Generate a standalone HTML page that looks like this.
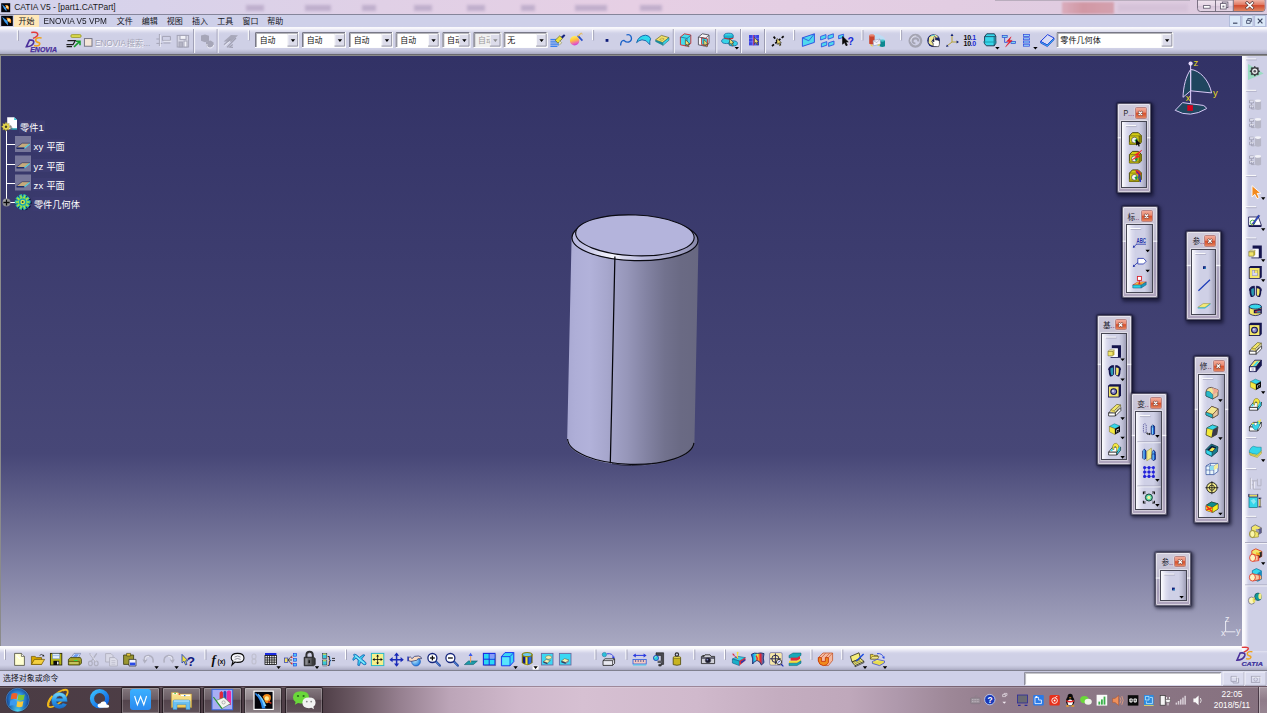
<!DOCTYPE html>
<html><head><meta charset="utf-8"><title>CATIA V5 - [part1.CATPart]</title>
<style>
html,body{margin:0;padding:0}
body{width:1267px;height:713px;overflow:hidden;position:relative;background:#cfd0e6;font-family:"Liberation Sans",sans-serif;font-size:8.2px;color:#000}
.a{position:absolute}
svg.a{left:0;top:0;overflow:visible}
.t{position:absolute;white-space:nowrap;line-height:1}
#title{left:0;top:0;width:1267px;height:14px;background:linear-gradient(90deg,#d3d3ec 0,#d8d2ea 12%,#e0d0e6 30%,#e6cfe4 50%,#e2cde2 75%,#dccbdf 100%)}
#menubar{left:0;top:14px;width:1267px;height:13px;background:#ced0e9;border-top:1px solid #85859a;box-sizing:border-box}
#tbtop{left:0;top:27px;width:1267px;height:29px;background:linear-gradient(180deg,#fbfbfd 0,#f6f6fb 1.5px,#e4e4f2 3.5px,#d2d3e8 6px,#cfd0e6 8px,#cfd0e6 22px,#bdbed4 24.5px,#a7a8c0 26.8px,#6a6a6e 27px,#6a6a6e 28px,#8b8b8b 28.2px,#8b8b8b 29px)}
#view{left:1px;top:56px;width:1241px;height:589.5px;background:linear-gradient(180deg,#323266 0,#474777 67.3%,#a9a9c2 100%)}
#viewleft{left:0;top:56px;width:1px;height:590px;background:#8b8b8b}
#tbright{left:1242px;top:56px;width:25px;height:594.5px;background:linear-gradient(90deg,#fbfbfd 0,#f8f8fc 2.5px,#e6e6f3 4.5px,#d4d5ea 6px,#cfd0e6 7.5px,#cfd0e6 100%)}
#tbbot{left:0;top:645.5px;width:1267px;height:25.5px;background:linear-gradient(180deg,#fcfcfc 0,#fafafc 2px,#e6e6f3 4.5px,#d2d3e8 7px,#cfd0e6 9px,#cfd0e6 19px,#bcbdd3 22px,#a5a5bd 24.3px,#6e6e78 24.6px,#6e6e78 25.5px)}
#status{left:0;top:671px;width:1267px;height:15px;background:#cfd0e8}
#task{left:0;top:686px;width:1267px;height:27px;background:linear-gradient(90deg,#4b3c44 0,#503f48 25.5%,#6a5862 28%,#957f8f 31.5%,#bca5b8 35.5%,#d0b9cc 41%,#d6c0d2 46%,#d0b9cc 55%,#c4adc0 61.5%,#bfa8bb 67%,#ae98ab 71%,#9d8797 75%,#927c8c 79%,#8b7685 87%,#86717f 100%)}
</style></head>
<body>
<div class="a" id="title"></div>
<div class="a" id="menubar"></div>
<div class="a" id="tbtop"></div>
<div class="a" id="view"></div>
<div class="a" id="viewleft"></div>
<div class="a" id="tbbot"></div>
<div class="a" id="tbright"></div>
<div class="a" id="status"></div>
<div class="a" id="task"></div>
<svg class="a" width="1267" height="713" viewBox="0 0 1267 713">
<defs>
<linearGradient id="gBody" gradientUnits="userSpaceOnUse" x1="567" y1="0" x2="699" y2="0">
<stop offset="0" stop-color="#a9a9d2"/><stop offset=".06" stop-color="#aeaed7"/><stop offset=".17" stop-color="#b2b2da"/>
<stop offset=".30" stop-color="#a7a7cd"/><stop offset=".345" stop-color="#a2a2c7"/><stop offset=".46" stop-color="#9696b9"/><stop offset=".60" stop-color="#8383a3"/>
<stop offset=".74" stop-color="#72728e"/><stop offset=".86" stop-color="#6a6a84"/><stop offset="1" stop-color="#686881"/></linearGradient>
<linearGradient id="gBand" gradientUnits="userSpaceOnUse" x1="572" y1="0" x2="698" y2="0">
<stop offset="0" stop-color="#b6b6de"/><stop offset=".12" stop-color="#c6c6e6"/><stop offset=".27" stop-color="#ececfa"/><stop offset=".34" stop-color="#f4f4fc"/>
<stop offset=".40" stop-color="#dcdcf0"/><stop offset=".55" stop-color="#bdbde0"/><stop offset=".78" stop-color="#a9a9cc"/><stop offset=".93" stop-color="#9797ba"/><stop offset="1" stop-color="#8585a6"/></linearGradient>
</defs>
<path d="M571.6 237.4 L567.2 439.1 A63.6 24.3 1.7 0 0 694.4 442.9 L698.5 240.6 A63 21.6 1.4 0 1 571.6 237.4Z" fill="url(#gBody)"/>
<path d="M567.6 439.1 A63.2 24 1.7 0 0 693.9 442.9" fill="none" stroke="#0a0a12" stroke-width="1.15"/>
<path d="M612 463.6 Q631 467.6 652 463.4" fill="none" stroke="#1a1a28" stroke-width="1" opacity=".75"/>
<ellipse cx="635" cy="239" rx="63" ry="21.6" transform="rotate(1.4 635 239)" fill="url(#gBand)" stroke="#0a0a12" stroke-width="1.15"/>
<ellipse cx="634.9" cy="235.4" rx="59.3" ry="20.4" transform="rotate(2.3 634.9 235.4)" fill="#b4b4dc" stroke="#0a0a12" stroke-width="1.15"/>
<path d="M614.9 256.6 L611.8 400 L610.3 463.2" fill="none" stroke="#05050c" stroke-width="1.25"/>
<path d="M6.5 131V199M6.5 144.5H15M6.5 164.5H15M6.5 183.5H15M10 202.5H15" stroke="#fff" stroke-width="1" fill="none"/>
<rect x="19" y="120.5" width="26" height="13" fill="#3c3b70"/>
<rect x="32.5" y="139.5" width="33" height="13" fill="#3c3b70"/>
<rect x="32.5" y="159" width="33" height="13" fill="#3c3b70"/>
<rect x="32.5" y="178" width="33" height="13" fill="#3c3b70"/>
<rect x="32.5" y="197" width="48" height="14" fill="#3c3b70"/>
<path d="M7.2 117.2H14.2L17 120V129.2H7.2Z" fill="#fff"/><path d="M14.2 117.2L17 120H14.2Z" fill="#35c8d8"/><path d="M11 128.3H17V129.6H11Z" fill="#109aa8"/>
<g transform="translate(6 126.7)"><path d="M0-4.6L1 -2.6 3.2-3.3 2.8-1.2 4.6 0 2.8 1.2 3.2 3.3 1 2.6 0 4.6 -1 2.6 -3.2 3.3 -2.8 1.2 -4.6 0 -2.8-1.2 -3.2-3.3 -1-2.6Z" fill="#efe25a" stroke="#8a7d20" stroke-width=".4"/><circle r="1.3" fill="#4a4420"/><circle r="2.6" fill="none" stroke="#d8c840" stroke-width=".6"/></g>
<path d="M9.5 124.5q3 1 3 4.5l-2.5 1z" fill="#555" opacity=".55"/>
<rect x="15" y="136" width="16" height="16" fill="#77779a"/>
<g transform="translate(15 136)"><path d="M1.5 11.5L7.2 7.2H15L9.5 11.5Z" fill="#c4ab7c"/><path d="M1.5 11.5H9.5V13H1.5Z" fill="#1e2c6a"/><path d="M9.5 11.5L15 7.2V8.4L9.5 13Z" fill="#52d6e2"/><path d="M1.5 11.5L7.2 7.2H15" fill="none" stroke="#2a2a5a" stroke-width=".6"/></g>
<rect x="15" y="155.5" width="16" height="16" fill="#77779a"/>
<g transform="translate(15 155.5)"><path d="M1.5 11.5L7.2 7.2H15L9.5 11.5Z" fill="#c4ab7c"/><path d="M1.5 11.5H9.5V13H1.5Z" fill="#1e2c6a"/><path d="M9.5 11.5L15 7.2V8.4L9.5 13Z" fill="#52d6e2"/><path d="M1.5 11.5L7.2 7.2H15" fill="none" stroke="#2a2a5a" stroke-width=".6"/></g>
<rect x="15" y="174.5" width="16" height="16" fill="#77779a"/>
<g transform="translate(15 174.5)"><path d="M1.5 11.5L7.2 7.2H15L9.5 11.5Z" fill="#c4ab7c"/><path d="M1.5 11.5H9.5V13H1.5Z" fill="#1e2c6a"/><path d="M9.5 11.5L15 7.2V8.4L9.5 13Z" fill="#52d6e2"/><path d="M1.5 11.5L7.2 7.2H15" fill="none" stroke="#2a2a5a" stroke-width=".6"/></g>
<circle cx="6.5" cy="202.5" r="4" fill="#8e8e92"/><circle cx="5.8" cy="201.6" r="2.6" fill="#a4a4a8"/><path d="M3.4 202.5H9.6M6.5 199.4V205.6" stroke="#0a0a0a" stroke-width="1.3"/>
<g transform="translate(22.7 202)"><path transform="translate(1.6 .8)" d="M4.65 -1.19L7.39 -1.27L7.39 1.27L4.65 1.19L4.46 1.77L6.72 3.32L5.24 5.37L3.06 3.70L2.57 4.05L3.49 6.64L1.08 7.42L0.30 4.79L-0.30 4.79L-1.08 7.42L-3.49 6.64L-2.57 4.05L-3.06 3.70L-5.24 5.37L-6.72 3.32L-4.46 1.77L-4.65 1.19L-7.39 1.27L-7.39 -1.27L-4.65 -1.19L-4.46 -1.77L-6.72 -3.32L-5.24 -5.37L-3.06 -3.70L-2.57 -4.05L-3.49 -6.64L-1.08 -7.42L-0.30 -4.79L0.30 -4.79L1.08 -7.42L3.49 -6.64L2.57 -4.05L3.06 -3.70L5.24 -5.37L6.72 -3.32L4.46 -1.77Z" fill="#0a0a30" opacity=".8"/><path d="M4.65 -1.19L7.39 -1.27L7.39 1.27L4.65 1.19L4.46 1.77L6.72 3.32L5.24 5.37L3.06 3.70L2.57 4.05L3.49 6.64L1.08 7.42L0.30 4.79L-0.30 4.79L-1.08 7.42L-3.49 6.64L-2.57 4.05L-3.06 3.70L-5.24 5.37L-6.72 3.32L-4.46 1.77L-4.65 1.19L-7.39 1.27L-7.39 -1.27L-4.65 -1.19L-4.46 -1.77L-6.72 -3.32L-5.24 -5.37L-3.06 -3.70L-2.57 -4.05L-3.49 -6.64L-1.08 -7.42L-0.30 -4.79L0.30 -4.79L1.08 -7.42L3.49 -6.64L2.57 -4.05L3.06 -3.70L5.24 -5.37L6.72 -3.32L4.46 -1.77Z" fill="#a8e23a" stroke="#10b8c8" stroke-width=".9" stroke-linejoin="round"/><circle r="3.8" fill="#14a8b4"/><circle r="2.3" fill="#d8e84a"/><circle r="1" fill="#1a4a5a"/></g>
<text x="20.1" y="131.2" font-size="9.2" fill="#ffffff" font-family="'Liberation Sans','Noto Sans CJK SC',sans-serif">零件</text>
<text x="38.6" y="131.2" font-size="9.6" fill="#fff">1</text>
<text x="33.6" y="150.3" font-size="9.6" fill="#fff">xy</text>
<text x="46.4" y="150.3" font-size="9.2" fill="#ffffff" font-family="'Liberation Sans','Noto Sans CJK SC',sans-serif">平面</text>
<text x="33.6" y="169.8" font-size="9.6" fill="#fff">yz</text>
<text x="46.4" y="169.8" font-size="9.2" fill="#ffffff" font-family="'Liberation Sans','Noto Sans CJK SC',sans-serif">平面</text>
<text x="33.6" y="188.8" font-size="9.6" fill="#fff">zx</text>
<text x="46.4" y="188.8" font-size="9.2" fill="#ffffff" font-family="'Liberation Sans','Noto Sans CJK SC',sans-serif">平面</text>
<text x="33.9" y="208.2" font-size="9.2" fill="#ffffff" font-family="'Liberation Sans','Noto Sans CJK SC',sans-serif">零件几何体</text>
<path d="M1190.6 69.5C1199.5 70 1209 80 1211.6 92.9L1190.6 90.8Z" fill="#20465f" stroke="#d9c9f6" stroke-width="1"/>
<path d="M1190.6 69.5C1186 76 1183.4 86 1183 97.3L1190.6 90.8Z" fill="#20465f" stroke="#d9c9f6" stroke-width="1"/>
<path d="M1182.6 102.6L1175.2 110.3Q1190 118.8 1206.6 108.6Q1206 106.5 1203.2 105.4Q1192 104 1182.6 102.6Z" fill="#20465f" stroke="#d9c9f6" stroke-width="1"/>
<path d="M1190.6 64V103.5" stroke="#d9c9f6" stroke-width="1.1"/>
<circle cx="1190.6" cy="63.6" r="2.1" fill="#e9dcff"/>
<rect x="1187.3" y="105.2" width="5.6" height="5.6" fill="#d8001c"/>
<text x="1193.6" y="65.8" font-size="9.5" fill="#e8d820">z</text>
<text x="1213" y="96" font-size="9.5" fill="#e8d820">y</text>
<text x="1185.8" y="100.6" font-size="9.5" fill="#e8d820">x</text>
<path d="M1225.6 621V631.8H1235.4" stroke="#ececf4" stroke-width="1" fill="none"/>
<text x="1225" y="621.5" font-size="9" fill="#ececf4">z</text>
<text x="1236" y="634" font-size="9" fill="#ececf4">y</text>
<text x="1221" y="636" font-size="9" fill="#ececf4">x</text>
</svg>
<div class="a" style="left:995px;top:0;width:195px;height:1.2px;background:#a8a0ae;opacity:.7"></div>
<div class="a" style="left:1062px;top:2px;width:52px;height:11.5px;background:linear-gradient(90deg,#d9a7b6,#cf8f9a 40%,#d39aa6);opacity:.85;filter:blur(.8px)"></div>
<div class="a" style="left:1118px;top:4px;width:70px;height:8px;background:#d2bfd6;opacity:.7;filter:blur(1.5px)"></div>
<div class="a" style="left:246px;top:5px;width:18px;height:6px;background:#b5a4c4;opacity:.75;filter:blur(1.5px)"></div>
<div class="a" style="left:305px;top:5px;width:26px;height:6px;background:#b5a4c4;opacity:.75;filter:blur(1.5px)"></div>
<div class="a" style="left:362px;top:5px;width:14px;height:6px;background:#b5a4c4;opacity:.75;filter:blur(1.5px)"></div>
<div class="a" style="left:414px;top:5px;width:18px;height:6px;background:#b5a4c4;opacity:.75;filter:blur(1.5px)"></div>
<div class="a" style="left:467px;top:5px;width:18px;height:6px;background:#b5a4c4;opacity:.75;filter:blur(1.5px)"></div>
<div class="a" style="left:521px;top:5px;width:14px;height:6px;background:#b5a4c4;opacity:.75;filter:blur(1.5px)"></div>
<div class="a" style="left:575px;top:5px;width:32px;height:6px;background:#b5a4c4;opacity:.75;filter:blur(1.5px)"></div>
<div class="a" style="left:640px;top:5px;width:22px;height:6px;background:#b5a4c4;opacity:.75;filter:blur(1.5px)"></div>
<div class="t" style="left:14.3px;top:3.2px;font-size:8.45px;color:#1b1b22;letter-spacing:-.02px">CATIA V5 - [part1.CATPart]</div>
<div class="a" style="left:14px;top:14.8px;width:25px;height:12.2px;background:#ffe7b7"></div>
<div class="t" style="left:43.6px;top:18.3px;font-size:8.25px;transform:scaleY(1.07);transform-origin:0 100%;color:#15151c">ENOVIA V5 VPM</div>
<svg class="a" width="1267" height="60" viewBox="0 0 1267 60">
<defs>
<linearGradient id="gFlame" x1="0" y1="0" x2="1" y2="1"><stop offset="0" stop-color="#1c7ae0"/><stop offset=".45" stop-color="#62b8ff"/><stop offset=".55" stop-color="#ffb040"/><stop offset="1" stop-color="#d04a10"/></linearGradient>
<linearGradient id="gClose" x1="0" y1="0" x2="0" y2="1"><stop offset="0" stop-color="#efb5a8"/><stop offset=".45" stop-color="#e0765f"/><stop offset=".5" stop-color="#d14a2e"/><stop offset="1" stop-color="#e08a66"/></linearGradient>
<linearGradient id="gCap" x1="0" y1="0" x2="0" y2="1"><stop offset="0" stop-color="#f1e6f0"/><stop offset=".5" stop-color="#e4d4e4"/><stop offset=".55" stop-color="#d6c4d8"/><stop offset="1" stop-color="#e4d6e6"/></linearGradient>
<linearGradient id="gSph" x1=".3" y1="0" x2=".6" y2="1"><stop offset="0" stop-color="#fff060"/><stop offset=".4" stop-color="#ffc43a"/><stop offset=".75" stop-color="#ee6ab0"/><stop offset="1" stop-color="#c83ad8"/></linearGradient>
</defs>
<rect x="1.2" y="3.2" width="9" height="9" fill="#06060c"/><path d="M2.0 4.2L6.15 7.7L6.6 11.6L3.8999999999999995 8.6Z" fill="#3a9af0"/><path d="M5.25 5.0Q9.749999999999998 4.55 8.85 9.5Q6.6 9.95 5.25 5.0Z" fill="#ff9a2a"/><circle cx="7.140000000000001" cy="6.98" r="1.08" fill="#ffe9a0"/>
<rect x="1.2" y="15.8" width="11.6" height="10.2" fill="#06060c"/><path d="M2.0 16.8L7.58 20.9L8.16 25.4L4.68 21.92Z" fill="#3a9af0"/><path d="M6.42 17.84Q12.219999999999999 17.330000000000002 11.059999999999999 22.939999999999998Q8.16 23.45 6.42 17.84Z" fill="#ff9a2a"/><circle cx="8.856" cy="20.084" r="1.392" fill="#ffe9a0"/>
<path d="M1197.5 0H1265V8.5Q1265 11.5 1262 11.5H1200.5Q1197.5 11.5 1197.5 8.5Z" fill="url(#gCap)" stroke="#6f6678" stroke-width=".9"/>
<path d="M1233.5 0H1264.6V8.4Q1264.6 11.1 1261.8 11.1H1233.5Z" fill="url(#gClose)"/>
<path d="M1215.5 0V11.4M1233.3 0V11.4" stroke="#6f6678" stroke-width=".9"/>
<rect x="1203.5" y="5.6" width="6.6" height="2.6" fill="#fff" stroke="#5c566a" stroke-width=".8"/>
<rect x="1222.3" y="2" width="5.6" height="5.6" fill="#e9e2ee" stroke="#5c566a" stroke-width=".8"/><rect x="1220.6" y="3.6" width="5.6" height="5.4" fill="#fff" stroke="#5c566a" stroke-width=".8"/><rect x="1222.4" y="5.6" width="2" height="1.8" fill="#7a7488"/>
<path d="M1247 2.800L1252.400 7.800M1252.400 2.800L1247 7.800" stroke="#5a3a3a" stroke-width="2.900" stroke-linecap="square"/><path d="M1247 2.800L1252.400 7.800M1252.400 2.800L1247 7.800" stroke="#fff" stroke-width="1.600" stroke-linecap="square"/>
<rect x="1229.5" y="15.6" width="11" height="10.8" fill="#dbe8f8" stroke="#aab6d6" stroke-width=".8"/>
<rect x="1242" y="15.6" width="11" height="10.8" fill="#dbe8f8" stroke="#aab6d6" stroke-width=".8"/>
<rect x="1254.7" y="15.6" width="11" height="10.8" fill="#dbe8f8" stroke="#aab6d6" stroke-width=".8"/>
<path d="M1233 23.2H1237.4" stroke="#4a5470" stroke-width="1.3"/>
<path d="M1246.6 20.4h3.6v3h-3.6zM1247.8 20.2v-1.6h3.6v3h-1.2" fill="none" stroke="#4a5470" stroke-width=".9"/>
<path d="M1257.8 18.6L1262.4 23.4M1262.4 18.6L1257.8 23.4" stroke="#3a4460" stroke-width="1.2"/>
<text x="18.6" y="24.3" font-size="8" fill="#15151c" font-family="'Liberation Sans','Noto Sans CJK SC',sans-serif">开始</text>
<text x="116.8" y="24.3" font-size="8" fill="#15151c" font-family="'Liberation Sans','Noto Sans CJK SC',sans-serif">文件</text>
<text x="141.8" y="24.3" font-size="8" fill="#15151c" font-family="'Liberation Sans','Noto Sans CJK SC',sans-serif">编辑</text>
<text x="166.8" y="24.3" font-size="8" fill="#15151c" font-family="'Liberation Sans','Noto Sans CJK SC',sans-serif">视图</text>
<text x="191.9" y="24.3" font-size="8" fill="#15151c" font-family="'Liberation Sans','Noto Sans CJK SC',sans-serif">插入</text>
<text x="217.3" y="24.3" font-size="8" fill="#15151c" font-family="'Liberation Sans','Noto Sans CJK SC',sans-serif">工具</text>
<text x="242.4" y="24.3" font-size="8" fill="#15151c" font-family="'Liberation Sans','Noto Sans CJK SC',sans-serif">窗口</text>
<text x="267.3" y="24.3" font-size="8" fill="#15151c" font-family="'Liberation Sans','Noto Sans CJK SC',sans-serif">帮助</text>
<path d="M17.4 30V40.5" stroke="#fff" stroke-width="1.1"/><path d="M18.4 30.5V41.0" stroke="#9a9ab0" stroke-width=".8"/>
<path d="M31.2 32.4Q37.6 31.6 37.8 34.2Q37.6 36.6 33 38.4" fill="none" stroke="#e23a3a" stroke-width="1.5"/>
<path d="M29.4 40.2Q34.6 39.4 33.6 43Q32 46.8 26.4 46.6Z" fill="none" stroke="#4a2f9a" stroke-width="1.7"/>
<path d="M41.6 38Q36 37 35.6 40.2Q35.8 42 38.6 42.6Q41 43.6 38.6 45.6Q36.4 46.4 34 45.6" fill="none" stroke="#f0a21e" stroke-width="1.6"/>
<text x="30.2" y="52" font-size="6.6" font-weight="bold" font-style="italic" fill="#4a2f9a" stroke="#4a2f9a" stroke-width=".25" textLength="26.8" lengthAdjust="spacingAndGlyphs">ENOVIA</text>
<rect x="70.8" y="34.6" width="10.4" height="2.9" rx="1.4" fill="#d8d84a" stroke="#8e8e20" stroke-width=".7"/>
<path d="M67.4 40.6H75.4L73 44.6H66.4M66.6 46.6H72" fill="none" stroke="#1c1c1c" stroke-width="1.1"/>
<path d="M74 47L79.4 41.6M76 41.2H80V45.2" fill="none" stroke="#139a2a" stroke-width="1.5"/>
<rect x="84.4" y="38.6" width="7.6" height="7.6" fill="#f4e6d8" stroke="#6c6c7c" stroke-width=".9"/>
<text x="95.6" y="46.6" font-size="8.2" fill="#fff">ENOVIA</text><text x="95" y="46" font-size="8.2" fill="#a2a2b4">ENOVIA</text>
<text x="127.7" y="46.6" font-size="8" fill="#fff" font-family="'Liberation Sans','Noto Sans CJK SC',sans-serif">搜索</text>
<text x="127.1" y="46" font-size="8" fill="#a2a2b4" font-family="'Liberation Sans','Noto Sans CJK SC',sans-serif">搜索</text>
<text x="143.4" y="46" font-size="8.2" fill="#a2a2b4">...</text>
<g fill="none" stroke="#a4a4b6" stroke-width="1"><path d="M159.4 34v12M156.4 39h3M156.4 43.4h6M162.4 36.4h8v4h-8zM163.4 43h7"/></g><g fill="none" stroke="#f2f2f8" stroke-width=".8"><path d="M160.4 35v12M163.4 41.2h8"/></g>
<g stroke="#a4a4b6" stroke-width="1" fill="#d9d9e6"><rect x="177.2" y="35.4" width="11.4" height="11.6"/><rect x="180" y="35.4" width="6" height="4" fill="#f2f2f8"/><rect x="179" y="42" width="3.4" height="5" fill="#b4b4c4"/><rect x="184" y="41" width="3" height="6" fill="#f2f2f8"/></g>
<path d="M193.6 29V53" stroke="#9c9cb2" stroke-width="1"/><path d="M194.6 29V53" stroke="#f6f6fb" stroke-width="1"/>
<path d="M201 35.6l4-1.2 4 1.4v5l-4 1.4-4-1.4z" fill="#a6a6b8"/><path d="M206 41.4l4.6-1 3 2v3.4l-3.6 2-4-1.8z" fill="#a6a6b8"/><path d="M207 44a3.4 3 0 1 0 6.6 1" fill="none" stroke="#f0f0f6" stroke-width=".9"/>
<path d="M217.2 29V53" stroke="#9c9cb2" stroke-width="1"/><path d="M218.2 29V53" stroke="#f6f6fb" stroke-width="1"/>
<path d="M223.6 41.6L231 35l7 .2-6.6 6.6z" fill="#a8a8ba"/><path d="M224 44.6l6.4-5.4M227 47.4l9-9.4M233 47.4l-3.4-.4 3.2-2.4" fill="none" stroke="#a0a0b2" stroke-width="1.2"/><path d="M224.6 46l5.6-5" stroke="#f2f2f8" stroke-width=".7"/>
<path d="M248.4 30V40" stroke="#fff" stroke-width="1.1"/><path d="M249.4 30.5V40.5" stroke="#9a9ab0" stroke-width=".8"/>
<rect x="255" y="32" width="44" height="16" fill="#fff"/><path d="M255.5 48V32.5H299" fill="none" stroke="#7c7c8c" stroke-width="1"/><path d="M256.4 47V33.4H298" fill="none" stroke="#3e3e4a" stroke-width=".8" opacity=".55"/><path d="M255 47.5H298.5V32" fill="none" stroke="#fdfdfd" stroke-width="1"/><rect x="287.5" y="34" width="10.5" height="12.4" fill="#dcdcea"/><path d="M287.9 46V34.4H298.0" fill="none" stroke="#fafafc" stroke-width=".9"/><path d="M287.5 46.1H297.6V34" fill="none" stroke="#8e8e9e" stroke-width=".9"/><path d="M290.75 39.300000000000004h4.4l-2.2 2.6z" fill="#000"/><text x="259.7" y="43.4" font-size="7.9" fill="#111" font-family="'Liberation Sans','Noto Sans CJK SC',sans-serif">自动</text>
<rect x="302" y="32" width="44" height="16" fill="#fff"/><path d="M302.5 48V32.5H346" fill="none" stroke="#7c7c8c" stroke-width="1"/><path d="M303.4 47V33.4H345" fill="none" stroke="#3e3e4a" stroke-width=".8" opacity=".55"/><path d="M302 47.5H345.5V32" fill="none" stroke="#fdfdfd" stroke-width="1"/><rect x="334.5" y="34" width="10.5" height="12.4" fill="#dcdcea"/><path d="M334.9 46V34.4H345.0" fill="none" stroke="#fafafc" stroke-width=".9"/><path d="M334.5 46.1H344.6V34" fill="none" stroke="#8e8e9e" stroke-width=".9"/><path d="M337.75 39.300000000000004h4.4l-2.2 2.6z" fill="#000"/><text x="306.7" y="43.4" font-size="7.9" fill="#111" font-family="'Liberation Sans','Noto Sans CJK SC',sans-serif">自动</text>
<rect x="349" y="32" width="44" height="16" fill="#fff"/><path d="M349.5 48V32.5H393" fill="none" stroke="#7c7c8c" stroke-width="1"/><path d="M350.4 47V33.4H392" fill="none" stroke="#3e3e4a" stroke-width=".8" opacity=".55"/><path d="M349 47.5H392.5V32" fill="none" stroke="#fdfdfd" stroke-width="1"/><rect x="381.5" y="34" width="10.5" height="12.4" fill="#dcdcea"/><path d="M381.9 46V34.4H392.0" fill="none" stroke="#fafafc" stroke-width=".9"/><path d="M381.5 46.1H391.6V34" fill="none" stroke="#8e8e9e" stroke-width=".9"/><path d="M384.75 39.300000000000004h4.4l-2.2 2.6z" fill="#000"/><text x="353.7" y="43.4" font-size="7.9" fill="#111" font-family="'Liberation Sans','Noto Sans CJK SC',sans-serif">自动</text>
<rect x="395.6" y="32" width="44" height="16" fill="#fff"/><path d="M396.1 48V32.5H439.6" fill="none" stroke="#7c7c8c" stroke-width="1"/><path d="M397.0 47V33.4H438.6" fill="none" stroke="#3e3e4a" stroke-width=".8" opacity=".55"/><path d="M395.6 47.5H439.1V32" fill="none" stroke="#fdfdfd" stroke-width="1"/><rect x="428.1" y="34" width="10.5" height="12.4" fill="#dcdcea"/><path d="M428.5 46V34.4H438.6" fill="none" stroke="#fafafc" stroke-width=".9"/><path d="M428.1 46.1H438.20000000000005V34" fill="none" stroke="#8e8e9e" stroke-width=".9"/><path d="M431.35 39.300000000000004h4.4l-2.2 2.6z" fill="#000"/><text x="400.3" y="43.4" font-size="7.9" fill="#111" font-family="'Liberation Sans','Noto Sans CJK SC',sans-serif">自动</text>
<clipPath id="cl5"><rect x="443" y="32" width="16.2" height="16"/></clipPath><clipPath id="cl6"><rect x="474" y="32" width="16.2" height="16"/></clipPath>
<rect x="442.4" y="32" width="28" height="16" fill="#fff"/><path d="M442.9 48V32.5H470.4" fill="none" stroke="#7c7c8c" stroke-width="1"/><path d="M443.79999999999995 47V33.4H469.4" fill="none" stroke="#3e3e4a" stroke-width=".8" opacity=".55"/><path d="M442.4 47.5H469.9V32" fill="none" stroke="#fdfdfd" stroke-width="1"/><rect x="458.9" y="34" width="10.5" height="12.4" fill="#dcdcea"/><path d="M459.29999999999995 46V34.4H469.4" fill="none" stroke="#fafafc" stroke-width=".9"/><path d="M458.9 46.1H469.0V34" fill="none" stroke="#8e8e9e" stroke-width=".9"/><path d="M462.15 39.300000000000004h4.4l-2.2 2.6z" fill="#000"/>
<g clip-path="url(#cl5)"><text x="447.1" y="43.4" font-size="7.9" fill="#111" font-family="'Liberation Sans','Noto Sans CJK SC',sans-serif">自动</text></g>
<rect x="473.4" y="32" width="28" height="16" fill="#f0f0f0"/><path d="M473.9 48V32.5H501.4" fill="none" stroke="#7c7c8c" stroke-width="1"/><path d="M474.79999999999995 47V33.4H500.4" fill="none" stroke="#3e3e4a" stroke-width=".8" opacity=".55"/><path d="M473.4 47.5H500.9V32" fill="none" stroke="#fdfdfd" stroke-width="1"/><rect x="489.9" y="34" width="10.5" height="12.4" fill="#dcdcea"/><path d="M490.29999999999995 46V34.4H500.4" fill="none" stroke="#fafafc" stroke-width=".9"/><path d="M489.9 46.1H500.0V34" fill="none" stroke="#8e8e9e" stroke-width=".9"/><path d="M493.15 39.300000000000004h4.4l-2.2 2.6z" fill="#8c8c8c"/>
<g clip-path="url(#cl6)"><text x="478.1" y="43.4" font-size="7.9" fill="#9a9a9a" font-family="'Liberation Sans','Noto Sans CJK SC',sans-serif">自动</text></g>
<rect x="503.6" y="32" width="44" height="16" fill="#fff"/><path d="M504.1 48V32.5H547.6" fill="none" stroke="#7c7c8c" stroke-width="1"/><path d="M505.0 47V33.4H546.6" fill="none" stroke="#3e3e4a" stroke-width=".8" opacity=".55"/><path d="M503.6 47.5H547.1V32" fill="none" stroke="#fdfdfd" stroke-width="1"/><rect x="536.1" y="34" width="10.5" height="12.4" fill="#dcdcea"/><path d="M536.5 46V34.4H546.6" fill="none" stroke="#fafafc" stroke-width=".9"/><path d="M536.1 46.1H546.2V34" fill="none" stroke="#8e8e9e" stroke-width=".9"/><path d="M539.35 39.300000000000004h4.4l-2.2 2.6z" fill="#000"/><text x="507.3" y="43.4" font-size="8" fill="#111" font-family="'Liberation Sans','Noto Sans CJK SC',sans-serif">无</text>
<path d="M550.4 39.4h8M550.4 41.2h9M550.4 43h9.4M550.4 44.8h8.6M550.4 46.4h7" stroke="#2a78ee" stroke-width="1"/>
<path d="M555.2 40.2l4.6-4.4 2.6 2.8-4.4 4.6z" fill="#eee23c" stroke="#55551a" stroke-width=".6"/><path d="M559.6 40.6l2 2.2-2.6 2.6" fill="#f6f6d0" stroke="#66661e" stroke-width=".5"/><path d="M561 36.8l3-2.6 1.4 1.4-2.8 3z" fill="#14237e"/>
<circle cx="574.6" cy="40.8" r="4.7" fill="url(#gSph)"/><path d="M577 36.2l4.8 5 1.2-1.2-4.6-5z" fill="#2c4ec8"/><path d="M577 36.2l1.4-1.2 1.6-1.4.8.6-2.2 2.4z" fill="#f0c040"/><path d="M580 33.6l1.6-.6.6 1.6" fill="none" stroke="#e8b030" stroke-width=".7"/>
<path d="M592.6 29.5V40" stroke="#fff" stroke-width="1.1"/><path d="M593.6 30.0V40.5" stroke="#9a9ab0" stroke-width=".8"/>
<rect x="605.6" y="39" width="2.8" height="2.8" fill="#0c1a78"/>
<path d="M620.6 45.6Q620.8 40.2 624 40.4Q626.4 42.6 629 42Q632.6 40 631 36.4Q629.4 34 626.4 35" fill="none" stroke="#1a62c8" stroke-width="1.3"/>
<path d="M636.6 42.6Q638.6 35.6 645.6 35.2Q649.6 35.6 650.6 38.6Q649.4 41.6 649.8 44.6Q646.4 39.4 642 39.8Q638.6 40.4 636.6 42.6Z" fill="#2fd8ee" stroke="#0d5fa8" stroke-width=".9"/>
<path d="M655.4 40l6-4.6 7.6 2.2-6.4 5z" fill="#f2e26a" stroke="#6a6420" stroke-width=".7"/><path d="M655.4 40v1.8l7.4 3.8v-3z" fill="#1b8a9a"/><path d="M662.8 42.6l6.2-5v2.6l-6.2 5.4z" fill="#3ed6e6" stroke="#14606c" stroke-width=".5"/><path d="M659.6 39.6l2.2-1.6 2.4.8-2 1.6z" fill="none" stroke="#8a7e30" stroke-width=".5"/>
<path d="M673.3 29V53" stroke="#9c9cb2" stroke-width="1"/><path d="M674.3 29V53" stroke="#f6f6fb" stroke-width="1"/>
<path d="M680.4 37l4-3.2 6.4 1.2v8.4l-3.6 2.8-6.8-1.4z" fill="#46dcec" stroke="#d42a2a" stroke-width=".9"/><path d="M680.4 37l6.6 1.4 3.8-3M687 38.4v7.6" fill="none" stroke="#1a5a88" stroke-width=".7"/>
<path transform="translate(685.4 39.6) scale(0.74)" d="M0 0L0 8.2 2 6.4 3.6 9.8 5 9.2 3.4 5.9 6 5.8Z" fill="#f3df72" stroke="#1a1a1a" stroke-width=".7" stroke-linejoin="round"/>
<path d="M698.4 37l4-3.2 6.6 1.2v8.4l-3.6 2.8-7-1.4z" fill="#f4f4f8" stroke="#3c3c48" stroke-width=".8"/><path d="M701.6 37.6l5.8 1.2v7l-5.8-1.2z" fill="#3ad4e6" stroke="#d42a2a" stroke-width=".9"/><path d="M698.4 37l6.8 1.4 3.8-3" fill="none" stroke="#3c3c48" stroke-width=".7"/>
<path transform="translate(703.8 39.6) scale(0.74)" d="M0 0L0 8.2 2 6.4 3.6 9.8 5 9.2 3.4 5.9 6 5.8Z" fill="#f3df72" stroke="#1a1a1a" stroke-width=".7" stroke-linejoin="round"/>
<path d="M715.8 29V53" stroke="#9c9cb2" stroke-width="1"/><path d="M716.8 29V53" stroke="#f6f6fb" stroke-width="1"/>
<ellipse cx="728.6" cy="35.6" rx="4.6" ry="2.4" fill="#38d4e8" stroke="#0e5a96" stroke-width=".7"/><path d="M724 35.6v2.2q4.6 2.8 9.2 0v-2.2" fill="#1fb0cc" stroke="#0e5a96" stroke-width=".6"/>
<ellipse cx="726.6" cy="41" rx="5" ry="2.6" fill="#38d4e8" stroke="#0e5a96" stroke-width=".7"/><ellipse cx="733" cy="43.4" rx="4.4" ry="2.6" fill="#38d4e8" stroke="#0e5a96" stroke-width=".7"/><path d="M724.6 38.4q4.2 1.6 8.6-.2" fill="none" stroke="#d42a2a" stroke-width="1"/>
<path transform="translate(729.6 38.6) scale(0.74)" d="M0 0L0 8.2 2 6.4 3.6 9.8 5 9.2 3.4 5.9 6 5.8Z" fill="#f3df72" stroke="#1a1a1a" stroke-width=".7" stroke-linejoin="round"/>
<path d="M734.5999999999999 46.900000000000006h4.4l-2.2 2.6z" fill="#000"/>
<path d="M740.5 29V53" stroke="#9c9cb2" stroke-width="1"/><path d="M741.5 29V53" stroke="#f6f6fb" stroke-width="1"/>
<rect x="749" y="35" width="10" height="10.4" fill="#3a42e0"/><path d="M749 38.4h10M749 41.8h10M752.4 35v10.4M755.8 35v10.4" stroke="#9aa0ff" stroke-width=".5"/><path d="M753.6 35v10.4" stroke="#d83a6a" stroke-width=".8"/>
<path transform="translate(754.4 37.6) scale(0.74)" d="M0 0L0 8.2 2 6.4 3.6 9.8 5 9.2 3.4 5.9 6 5.8Z" fill="#f3df72" stroke="#1a1a1a" stroke-width=".7" stroke-linejoin="round"/>
<path d="M764.5 29V53" stroke="#9c9cb2" stroke-width="1"/><path d="M765.5 29V53" stroke="#f6f6fb" stroke-width="1"/>
<path d="M772 46l12-10M773.6 36.6l7.4 9" stroke="#0a0a0a" stroke-width="1.7" stroke-dasharray="2.6 1.6"/>
<path transform="translate(777 38.4) scale(0.74)" d="M0 0L0 8.2 2 6.4 3.6 9.8 5 9.2 3.4 5.9 6 5.8Z" fill="#f3df72" stroke="#1a1a1a" stroke-width=".7" stroke-linejoin="round"/>
<path d="M793.6 29.5V40" stroke="#fff" stroke-width="1.1"/><path d="M794.6 30.0V40.5" stroke="#9a9ab0" stroke-width=".8"/>
<path d="M802.4 37.8l12-4v8.6l-12 4z" fill="#4fd9ee" stroke="#2a46e0" stroke-width=".9"/><path d="M802.4 37.8l6.4 3 5.6-7" fill="none" stroke="#2a46e0" stroke-width=".8"/>
<path d="M820.6 36.4l5.4-1.8v3.6l-5.4 1.8z" fill="#4fd9ee" stroke="#2a46e0" stroke-width=".8"/>
<path d="M828 35.6l5.4-1.8v3.6l-5.4 1.8z" fill="#4fd9ee" stroke="#2a46e0" stroke-width=".8"/>
<path d="M821.4 43.4l5.4-1.8v3.6l-5.4 1.8z" fill="#4fd9ee" stroke="#2a46e0" stroke-width=".8"/>
<path d="M828.6 42.8l5.4-1.8v3.6l-5.4 1.8z" fill="#4fd9ee" stroke="#2a46e0" stroke-width=".8"/>
<path d="M838.6 35.6l5-1.4v3.2l-5 1.4z" fill="#4fd9ee" stroke="#2a46e0" stroke-width=".8"/>
<path transform="translate(842.6 36.4) scale(0.95)" d="M0 0L0 8.2 2 6.4 3.6 9.8 5 9.2 3.4 5.9 6 5.8Z" fill="#0a0a0a" stroke="#0a0a0a" stroke-width=".7" stroke-linejoin="round"/>
<text x="847.4" y="45.4" font-size="10.5" font-weight="bold" fill="#1a2ad8">?</text>
<path d="M862 29.5V40" stroke="#fff" stroke-width="1.1"/><path d="M863 30.0V40.5" stroke="#9a9ab0" stroke-width=".8"/>
<path d="M874 33.4q6 0 11 5v8h-11z" fill="#bcdcf4"/>
<path d="M869.2 35.4v8.4q2.6 1.6 5.4 0v-8.4z" fill="#c8442e"/><ellipse cx="871.9" cy="35.4" rx="2.7" ry="1.2" fill="#e8826a"/>
<path d="M879.6 40.6v5.6q2.6 1.4 5.4 0v-5.6z" fill="#0e8890"/><ellipse cx="882.3" cy="40.6" rx="2.7" ry="1.1" fill="#48c4c8"/>
<path d="M873 40.6l7-1.6.6 5-7 1.8z" fill="#f4f4fa" stroke="#8a8ab0" stroke-width=".5"/><path d="M873 40.6l4 2 3-3.6" fill="none" stroke="#8a8ab0" stroke-width=".5"/><path d="M870.6 44.6l2 1.6M877.6 45.6l2.4-1" stroke="#e8d040" stroke-width="1.1"/>
<path d="M900.6 29.5V40" stroke="#fff" stroke-width="1.1"/><path d="M901.6 30.0V40.5" stroke="#9a9ab0" stroke-width=".8"/>
<circle cx="915.400" cy="40.800" r="5.800" fill="none" stroke="#a4a4b2" stroke-width="2.300"/><path d="M918.400 41.400Q918.400 38.200 915.200 38.200Q912.400 38.600 912.600 41.400Q913 43.400 915.400 43.400" fill="none" stroke="#a4a4b2" stroke-width="1.900"/><path d="M909.600 40.800A5.800 5.800 0 0 1 915.400 35" fill="none" stroke="#f4f4f8" stroke-width=".6" transform="translate(.8 .8)"/>
<circle cx="933.6" cy="40.6" r="6.4" fill="#16206e"/><path d="M929 37.6q3-3.6 7-2.6l2.6 2.6q-5-1-7 3.600q1 3.400 5 4.400q-5 1.600-8-2.500z" fill="#f0e890"/><path d="M931 36q2-1 4-.6" stroke="#4ad0e0" stroke-width=".8" fill="none"/>
<path d="M933.2 46.6v-3l-1.400-1.800.8-.8 1.400 1v-5.200q.8-.9 1.500 0v3.200q.8-.6 1.400.2q.8-.5 1.300.300q.9-.3 1.200.6v3.300l-.8 2.200z" fill="#fff" stroke="#222" stroke-width=".6"/>
<path d="M952 34.6V42L958 42M952 42l-5.600 4.400" fill="none" stroke="#b8a43a" stroke-width="1"/><path d="M952 33.600l-1.500 2.400h3zM959 42l-2.400-1.400v2.800zM946 46.800l2.600-.4-1.600-1.800z" fill="#12227a"/>
<text x="963.6" y="39.6" font-size="7" font-weight="bold" fill="#0a0a0a" letter-spacing="-.3">10</text><text x="970.6" y="39.6" font-size="7" font-weight="bold" fill="#1a2ad8" letter-spacing="-.3">.1</text>
<text x="963.6" y="46.2" font-size="7" font-weight="bold" fill="#0a0a0a" letter-spacing="-.3">10</text><text x="970.6" y="46.2" font-size="7" font-weight="bold" fill="#1a2ad8" letter-spacing="-.3">.0</text>
<path d="M984.6 36.600l2.200-2.800h7.600l1.400 2.400v7.200l-1.600 2.400h-7.800l-1.800-2z" fill="#38d6ea" stroke="#15304a" stroke-width=".9"/><path d="M984.600 36.600h9.600l1.600-.4M994.200 36.600v9.200" fill="none" stroke="#15304a" stroke-width=".7"/><path d="M983 42h13.600" stroke="#1a98a8" stroke-width=".9"/>
<path d="M995.1999999999999 46.900000000000006h4.4l-2.2 2.6z" fill="#000"/>
<rect x="1002.200" y="35.400" width="5" height="2.200" fill="#7fd8f0" stroke="#2a46d0" stroke-width=".7"/><rect x="1011" y="41.400" width="4.600" height="2.200" fill="#7fd8f0" stroke="#2a46d0" stroke-width=".7"/><path d="M1004.600 37.600v4.800h3" fill="none" stroke="#2a46d0" stroke-width=".8"/><path d="M1011 36.800l-4.400 4.800h2.800l-3.800 5.200 6.600-6.400h-2.800z" fill="#e01a2a" stroke="#e01a2a" stroke-width=".5"/>
<rect x="1023.400" y="34.6" width="6" height="2" fill="#9ad4f6" stroke="#2a46e0" stroke-width=".7"/>
<rect x="1023.400" y="37.8" width="6" height="2" fill="#9ad4f6" stroke="#2a46e0" stroke-width=".7"/>
<rect x="1023.400" y="41" width="6" height="2" fill="#9ad4f6" stroke="#2a46e0" stroke-width=".7"/>
<rect x="1023.400" y="44.2" width="6" height="2" fill="#9ad4f6" stroke="#2a46e0" stroke-width=".7"/>
<path d="M1033.2 46.900000000000006h4.4l-2.2 2.6z" fill="#000"/>
<path d="M1040.600 41.400l7-6.800 6.400 3.400-6.800 7z" fill="#d9dcf4" stroke="#1f3fe0" stroke-width="1"/><path d="M1040.600 41.400v1.600l6.800 3.600 6.600-6.800v-1.800l-6.800 7z" fill="#40d0e0" stroke="#1f3fe0" stroke-width=".8"/>
<rect x="1056.6" y="32" width="116.6" height="16" fill="#fff"/><path d="M1057.1 48V32.5H1173.1999999999998" fill="none" stroke="#7c7c8c" stroke-width="1"/><path d="M1058.0 47V33.4H1172.1999999999998" fill="none" stroke="#3e3e4a" stroke-width=".8" opacity=".55"/><path d="M1056.6 47.5H1172.6999999999998V32" fill="none" stroke="#fdfdfd" stroke-width="1"/><rect x="1161.6999999999998" y="34" width="10.5" height="12.4" fill="#dcdcea"/><path d="M1162.1 46V34.4H1172.1999999999998" fill="none" stroke="#fafafc" stroke-width=".9"/><path d="M1161.6999999999998 46.1H1171.7999999999997V34" fill="none" stroke="#8e8e9e" stroke-width=".9"/><path d="M1164.9499999999998 39.300000000000004h4.4l-2.2 2.6z" fill="#000"/><text x="1060.3" y="43.4" font-size="8.1" fill="#111" font-family="'Liberation Sans','Noto Sans CJK SC',sans-serif">零件几何体</text>
</svg>
<style>
.ftb{border:1px solid rgba(34,34,54,.62);border-radius:2px;box-shadow:1.200px 1.800px 3.500px 1.200px rgba(6,6,26,.5),0 0 1.500px .5px rgba(6,6,26,.45),inset 0 0 0 1px rgba(255,255,255,.5);background:linear-gradient(180deg,#cdc9da 0,#c6c2d4 13px,#bab6ca 19px,#aeaac0 28px,#a29eb8 60%,#a6a2bc 100%)}
.ftc{border:1px solid #474754;box-shadow:0 0 0 .8px rgba(255,255,255,.55);background:linear-gradient(90deg,#fcfcfe 0,#f0f0f8 8%,#dcdcee 20%,#cfd0e6 34%,#cfd0e6 70%,#bfc0d6 84%,#a6a6be 96%,#9c9cb4 100%)}
.fcl{width:10px;height:9.600px;border:1px solid #b88484;border-radius:1.500px;background:linear-gradient(180deg,#f2aa98 0,#ea8a72 42%,#d7502c 52%,#dc6a46 80%,#e68a68 100%);box-shadow:0 0 0 .6px rgba(255,235,230,.55)}
</style>
<div class="a ftb" style="left:1116.9px;top:103.0px;width:32.59999999999991px;height:88.19999999999999px;background:linear-gradient(180deg,#cfcbdc 0,#c8c4d6 13px,#bebace 32.5px,#f0f0f8 33.7px,#aaa4be 34.900000000000006px,#a59cb7 75%,#b0a5be 100%)"></div><div class="a ftc" style="left:1121.4px;top:121.4px;width:23.39999999999991px;height:64.79999999999998px"></div><div class="a fcl" style="left:1134.5px;top:107.4px"></div>
<div class="a ftb" style="left:1121.5px;top:205.89999999999998px;width:34.09999999999991px;height:90.60000000000002px;background:linear-gradient(180deg,#cfcbdc 0,#c8c4d6 13px,#bebace 33.099999999999994px,#f0f0f8 34.3px,#aaa4be 35.5px,#a59cb7 75%,#b0a5be 100%)"></div><div class="a ftc" style="left:1126.0px;top:224.29999999999998px;width:24.89999999999991px;height:67.20000000000002px"></div><div class="a fcl" style="left:1140.6px;top:210.29999999999998px"></div>
<div class="a ftb" style="left:1186.4px;top:230.79999999999998px;width:32.69999999999982px;height:87.29999999999998px;background:linear-gradient(180deg,#cfcbdc 0,#c8c4d6 13px,#bebace 32.3px,#f0f0f8 33.5px,#aaa4be 34.7px,#a59cb7 75%,#b0a5be 100%)"></div><div class="a ftc" style="left:1190.9px;top:249.2px;width:23.49999999999982px;height:63.89999999999998px"></div><div class="a fcl" style="left:1204.1px;top:235.2px"></div>
<div class="a ftb" style="left:1096.9px;top:314.5px;width:32.79999999999973px;height:148.7px;background:linear-gradient(180deg,#cfcbdc 0,#c8c4d6 13px,#bebace 47.199999999999996px,#f0f0f8 48.4px,#aaa4be 49.6px,#a59cb7 75%,#b0a5be 100%)"></div><div class="a ftc" style="left:1101.4px;top:332.9px;width:23.599999999999728px;height:125.29999999999998px"></div><div class="a fcl" style="left:1114.6999999999998px;top:318.9px"></div>
<div class="a ftb" style="left:1130.9px;top:393.0px;width:33.79999999999973px;height:120.20000000000005px;background:linear-gradient(180deg,#cfcbdc 0,#c8c4d6 13px,#bebace 40.3px,#f0f0f8 41.5px,#aaa4be 42.7px,#a59cb7 75%,#b0a5be 100%)"></div><div class="a ftc" style="left:1135.4px;top:411.4px;width:24.599999999999728px;height:96.80000000000004px"></div><div class="a fcl" style="left:1149.6999999999998px;top:397.4px"></div>
<div class="a ftb" style="left:1193.7px;top:355.8px;width:33.799999999999955px;height:165.2px;background:linear-gradient(180deg,#cfcbdc 0,#c8c4d6 13px,#bebace 51.199999999999996px,#f0f0f8 52.4px,#aaa4be 53.6px,#a59cb7 75%,#b0a5be 100%)"></div><div class="a ftc" style="left:1198.2px;top:374.2px;width:24.599999999999955px;height:141.79999999999998px"></div><div class="a fcl" style="left:1212.5px;top:360.2px"></div>
<div class="a ftb" style="left:1155.2px;top:551.5px;width:34.19999999999982px;height:52.5px;background:linear-gradient(180deg,#cfcbdc 0,#c8c4d6 13px,#bebace 23.900000000000002px,#f0f0f8 25.1px,#aaa4be 26.3px,#a59cb7 75%,#b0a5be 100%)"></div><div class="a ftc" style="left:1159.7px;top:569.9px;width:24.99999999999982px;height:29.1px"></div><div class="a fcl" style="left:1174.3999999999999px;top:555.9px"></div>
<svg class="a" width="1267" height="713" viewBox="0 0 1267 713">
<path d="M1139.15 112.05L1141.65 114.55M1141.65 112.05L1139.15 114.55" stroke="#7a4a40" stroke-width="2.300" stroke-linecap="square"/><path d="M1139.15 112.05L1141.65 114.55M1141.65 112.05L1139.15 114.55" stroke="#fff" stroke-width="1.250" stroke-linecap="square"/>
<text transform="translate(1123.5 115.5) scale(.78 1)" font-size="9" fill="#222">P</text><text x="1128.0" y="115.5" font-size="7.600" fill="#8a2a6a">...</text>
<path d="M1125.4 125.69999999999999H1136.0" stroke="#fff" stroke-width="1.100"/><path d="M1126.0 126.6H1136.6" stroke="#a4a4ba" stroke-width=".7"/>
<path d="M1145.25 214.95L1147.75 217.45M1147.75 214.95L1145.25 217.45" stroke="#7a4a40" stroke-width="2.300" stroke-linecap="square"/><path d="M1145.25 214.95L1147.75 217.45M1147.75 214.95L1145.25 217.45" stroke="#fff" stroke-width="1.250" stroke-linecap="square"/>
<text x="1127.6" y="219.5" font-size="7.6" fill="#1a1a2a" font-family="'Liberation Sans','Noto Sans CJK SC',sans-serif">标</text>
<text x="1135.1999999999998" y="219.5" font-size="7.600" fill="#7a1a5a">..</text>
<path d="M1130.0 228.6H1140.6" stroke="#fff" stroke-width="1.100"/><path d="M1130.6 229.5H1141.1999999999998" stroke="#a4a4ba" stroke-width=".7"/>
<path d="M1208.75 239.85L1211.25 242.35M1211.25 239.85L1208.75 242.35" stroke="#7a4a40" stroke-width="2.300" stroke-linecap="square"/><path d="M1208.75 239.85L1211.25 242.35M1211.25 239.85L1208.75 242.35" stroke="#fff" stroke-width="1.250" stroke-linecap="square"/>
<text x="1192.6" y="244.4" font-size="7.6" fill="#1a1a2a" font-family="'Liberation Sans','Noto Sans CJK SC',sans-serif">参</text>
<text x="1200.1" y="244.4" font-size="7.600" fill="#7a1a5a">..</text>
<path d="M1194.9 253.5H1205.5" stroke="#fff" stroke-width="1.100"/><path d="M1195.5 254.4H1206.1" stroke="#a4a4ba" stroke-width=".7"/>
<path d="M1119.35 323.55L1121.85 326.05M1121.85 323.55L1119.35 326.05" stroke="#7a4a40" stroke-width="2.300" stroke-linecap="square"/><path d="M1119.35 323.55L1121.85 326.05M1121.85 323.55L1119.35 326.05" stroke="#fff" stroke-width="1.250" stroke-linecap="square"/>
<text x="1103.1" y="328.1" font-size="7.6" fill="#1a1a2a" font-family="'Liberation Sans','Noto Sans CJK SC',sans-serif">基</text>
<text x="1110.6" y="328.1" font-size="7.600" fill="#7a1a5a">..</text>
<path d="M1105.4 337.2H1116.0" stroke="#fff" stroke-width="1.100"/><path d="M1106.0 338.09999999999997H1116.6" stroke="#a4a4ba" stroke-width=".7"/>
<path d="M1154.35 402.05L1156.85 404.55M1156.85 402.05L1154.35 404.55" stroke="#7a4a40" stroke-width="2.300" stroke-linecap="square"/><path d="M1154.35 402.05L1156.85 404.55M1156.85 402.05L1154.35 404.55" stroke="#fff" stroke-width="1.250" stroke-linecap="square"/>
<text x="1137.2" y="406.6" font-size="7.6" fill="#1a1a2a" font-family="'Liberation Sans','Noto Sans CJK SC',sans-serif">变</text>
<text x="1144.6" y="406.6" font-size="7.600" fill="#7a1a5a">..</text>
<path d="M1139.4 415.7H1150.0" stroke="#fff" stroke-width="1.100"/><path d="M1140.0 416.59999999999997H1150.6" stroke="#a4a4ba" stroke-width=".7"/>
<path d="M1217.15 364.85L1219.65 367.35M1219.65 364.85L1217.15 367.35" stroke="#7a4a40" stroke-width="2.300" stroke-linecap="square"/><path d="M1217.15 364.85L1219.65 367.35M1219.65 364.85L1217.15 367.35" stroke="#fff" stroke-width="1.250" stroke-linecap="square"/>
<text x="1199.8" y="369.4" font-size="7.6" fill="#1a1a2a" font-family="'Liberation Sans','Noto Sans CJK SC',sans-serif">修</text>
<text x="1207.3999999999999" y="369.40000000000003" font-size="7.600" fill="#7a1a5a">..</text>
<path d="M1202.2 378.5H1212.8" stroke="#fff" stroke-width="1.100"/><path d="M1202.8 379.4H1213.3999999999999" stroke="#a4a4ba" stroke-width=".7"/>
<path d="M1179.05 560.55L1181.55 563.05M1181.55 560.55L1179.05 563.05" stroke="#7a4a40" stroke-width="2.300" stroke-linecap="square"/><path d="M1179.05 560.55L1181.55 563.05M1181.55 560.55L1179.05 563.05" stroke="#fff" stroke-width="1.250" stroke-linecap="square"/>
<text x="1161.4" y="565.1" font-size="7.6" fill="#1a1a2a" font-family="'Liberation Sans','Noto Sans CJK SC',sans-serif">参</text>
<text x="1168.8999999999999" y="565.0999999999999" font-size="7.600" fill="#7a1a5a">..</text>
<path d="M1163.7 574.1999999999999H1174.3" stroke="#fff" stroke-width="1.100"/><path d="M1164.3 575.0999999999999H1174.8999999999999" stroke="#a4a4ba" stroke-width=".7"/>
<g transform="translate(1128.4 131.3)"><path d="M1 4.600L4 1.400H10L13 4.400V11L10.600 13H1z" fill="#d4cc14" stroke="#3e3e08" stroke-width=".9"/><path d="M10.600 4.600L13 4.400V11L10.600 13z" fill="#8a8408"/><path d="M1 10.800H10.600V13H1z" fill="#a8a00c"/><path d="M1 4.600H10.600V13M10.600 4.600L13 4.400" fill="none" stroke="#5a5a10" stroke-width=".6"/><circle cx="6" cy="8.800" r="2.900" fill="#f4f4f4" stroke="#333" stroke-width=".6"/><path d="M6 8.800L8.600 7.400A2.900 2.900 0 0 1 7.600 11.200z" fill="#13a03a"/><path d="M7.600 8L7.600 14.400 9.200 13 10.400 15.400 11.400 14.800 10.400 12.600 12.400 12.400z" fill="#0a0a0a"/></g>
<g transform="translate(1128.4 150)"><path d="M1 4.600L4 1.400H10L13 4.400V11L10.600 13H1z" fill="#d4cc14" stroke="#3e3e08" stroke-width=".9"/><path d="M10.600 4.600L13 4.400V11L10.600 13z" fill="#8a8408"/><path d="M1 10.800H10.600V13H1z" fill="#a8a00c"/><path d="M1 4.600H10.600V13M10.600 4.600L13 4.400" fill="none" stroke="#5a5a10" stroke-width=".6"/><circle cx="6" cy="8.800" r="2.900" fill="#f4f4f4" stroke="#333" stroke-width=".6"/><path d="M6 8.800L8.600 7.400A2.900 2.900 0 0 1 7.600 11.200z" fill="#13a03a"/><path d="M13.400 .2L6.400 4.800 9 5.800 3.600 9.800 11.600 6.400 9 5.400z" fill="#f0202a" stroke="#f0202a" stroke-width=".5"/></g>
<g transform="translate(1128.4 168.5)"><path d="M1 4.600L4 1.400H10L13 4.400V11L10.600 13H1z" fill="#d4cc14" stroke="#3e3e08" stroke-width=".9"/><path d="M10.600 4.600L13 4.400V11L10.600 13z" fill="#8a8408"/><path d="M1 10.800H10.600V13H1z" fill="#a8a00c"/><path d="M1 4.600H10.600V13M10.600 4.600L13 4.400" fill="none" stroke="#5a5a10" stroke-width=".6"/><circle cx="6" cy="8.800" r="2.900" fill="#f4f4f4" stroke="#333" stroke-width=".6"/><path d="M6 8.800L8.600 7.400A2.900 2.900 0 0 1 7.600 11.200z" fill="#13a03a"/><path d="M7 1.200Q12 2 12.600 6Q10 7.400 7.600 4.600z" fill="#e02a2a"/><path d="M8 3Q13 6 12 13.600M10.600 6Q9 10 12.400 13.400" fill="none" stroke="#1a2ad0" stroke-width=".9"/></g>
<g transform="translate(1132.6 236.6)"><text x="4" y="6.600" font-size="6.600" font-weight="bold" fill="#2030a8" font-family="Liberation Sans" textLength="9.400" lengthAdjust="spacingAndGlyphs">ABC</text><path d="M3.400 7.600H13.400M4 7.600L.8 10.600" stroke="#2030a8" stroke-width=".8" fill="none"/><path d="M.2 11.200L.8 8.600 2.800 10.600z" fill="#2030a8"/></g>
<path d="M1145.5 249.7h4.4l-2.2 2.6z" fill="#000"/>
<g transform="translate(1132.6 257.4)"><path d="M5.200 1H11L13.600 3.800 11 6.600H5.200z" fill="#fff" stroke="#2030a8" stroke-width=".8"/><path d="M5.200 5L.8 9" stroke="#2030a8" stroke-width=".8"/><path d="M.2 9.600L.8 7 2.800 9z" fill="#2030a8"/></g>
<path d="M1145.5 269.7h4.4l-2.2 2.6z" fill="#000"/>
<g transform="translate(1132.8 276.4)"><path d="M0 8.600L5 5.600H13.400L8.400 8.600z" fill="#f4e050" stroke="#d8202a" stroke-width=".6"/><path d="M3 8L6 6.400H10.600L7.600 8z" fill="#f08a2a"/><path d="M0 8.600H8.400V11.600H0z" fill="#2ad0e0" stroke="#0c5a8a" stroke-width=".5"/><path d="M8.400 8.600L13.400 5.600V8.400L8.400 11.600z" fill="#1a9ab8" stroke="#0c5a8a" stroke-width=".5"/><rect x="4.600" y="0" width="4" height="4" fill="#fff" stroke="#d8202a" stroke-width=".9"/><path d="M6.600 4V7.400" stroke="#d8202a" stroke-width=".9"/><path d="M5.400 7.800L6.600 5.800 7.800 7.800z" fill="#d8202a"/></g>
<rect x="1203" y="266.2" width="2.800" height="2.800" fill="#10207a"/><path d="M1204.4 267.59999999999997h1.400v1.400h-1.400z" fill="#2ab8e8" opacity=".7"/>
<path d="M1198.4 290.8L1210.0 279.8" stroke="#1a3ab8" stroke-width="1.200"/>
<g transform="translate(1197.8 302.4)"><path d="M0 5L5.400 1.200H12.600L7.200 5z" fill="#f4ea7a" stroke="#8a8430" stroke-width=".5"/><path d="M0 5H7.200L12.600 1.200V2.200L7.200 6.200H0z" fill="#2ab8d8"/></g>
<g transform="translate(1108 345.2)"><path d="M3.800 0H13V12.600H9.800V3.200H3.800z" fill="#15154e"/><path d="M3.800 3.200H9.800V12.200H3.800z" fill="#fafaff"/><path d="M2.600 12.300H10.200" stroke="#15154e" stroke-width=".8"/><path d="M0 6.200l1.600-1.600H6.400L5 6.200z" fill="#fbf6b0" stroke="#6a6420" stroke-width=".4"/><path d="M0 6.200H5V10.600H0z" fill="#f2e66a" stroke="#6a6420" stroke-width=".5"/><path d="M5 6.200l1.400-1.600v4.400l-1.400 1.600z" fill="#b8a62e"/></g>
<path d="M1120.3999999999999 358.4h4.4l-2.2 2.6z" fill="#000"/>
<g transform="translate(1108 365)"><path d="M.6 5Q.6 .8 5.600 .6V9.600Q4.600 12 2 11.400Q.6 9 .6 5z" fill="#15154e"/><path d="M12.600 5Q12.600 .8 7.600 .6V9.600Q8.600 12 11.200 11.400Q12.600 9 12.600 5z" fill="#15154e"/><path d="M2.400 3.600Q3.600 2.400 5.600 2.600V9.400Q4.400 10.600 3.200 10Q2.200 7 2.400 3.600z" fill="#2a9ab0"/><path d="M10.800 3.600Q9.600 2.400 7.600 2.600V9.400Q8.800 10.600 10 10Q11 7 10.800 3.600z" fill="#f2e66a"/><path d="M5.600 .6V9.600M7.600 .6V9.600" stroke="#15154e" stroke-width=".8"/><path d="M.6 5Q.6 .8 5.600 .6M12.600 5Q12.600 .8 7.600 .6" fill="none" stroke="#15154e" stroke-width=".9"/></g>
<path d="M1120.3999999999999 378.4h4.4l-2.2 2.6z" fill="#000"/>
<g transform="translate(1108 384.2)"><path d="M0 1.600L1.800 0H13V11.400L11.200 13.200H0z" fill="#15154e"/><path d="M.8 2.400H10.600V12.400H.8z" fill="#f2e66a"/><circle cx="5.700" cy="7.400" r="2.900" fill="#8a8ac8" stroke="#15154e" stroke-width="1.100"/><circle cx="5" cy="6.800" r="1.100" fill="#d8d8f4"/></g>
<g transform="translate(1108 403.6)"><path d="M.6 9.400L3.600 6H10.200L7.400 9.400z" fill="#fff" stroke="#111" stroke-width=".7"/><path d="M.6 9.400H7.400V12.400H.6z" fill="#fff" stroke="#111" stroke-width=".7"/><path d="M7.400 9.400L12.800 4V7L7.400 12.400z" fill="#fff" stroke="#111" stroke-width=".7"/><path d="M2.600 6.400L8.800 .8 12.600 1.400 6.400 7.200z" fill="#f2e66a" stroke="#4a4410" stroke-width=".6"/><path d="M6.400 7.200L12.600 1.400V3.400L6.600 9z" fill="#fbf8c8" stroke="#4a4410" stroke-width=".5"/><path d="M2.600 6.400L6.400 7.200 6.600 9 2.600 8z" fill="#e4d24a"/></g>
<path d="M1120.3999999999999 417.3h4.4l-2.2 2.6z" fill="#000"/>
<g transform="translate(1108.4 423.2)"><path d="M1 3.200L6 .6 11.600 2.800 6.600 5.600z" fill="#35d6ea" stroke="#0c6a78" stroke-width=".5"/><path d="M1 3.200L6.600 5.600V11.400L1 8.600z" fill="#f4e840" stroke="#6a6420" stroke-width=".5"/><path d="M6.600 5.600L11.600 2.800V8.600L6.600 11.400z" fill="#0a0a0a"/><path d="M8 6.600L10.400 5.400V8L8 9.200z" fill="#f4f4f4"/><path d="M8.600 7L10.400 6.200V8L8.600 8.800z" fill="#0a0a0a"/></g>
<path d="M1120.3999999999999 436.7h4.4l-2.2 2.6z" fill="#000"/>
<g transform="translate(1108 442.6)"><path d="M.6 9.600L4.600 4.600H12.600L8.800 9.600z" fill="#fff" stroke="#111" stroke-width=".7"/><path d="M.6 9.600H8.800V12.400H.6z" fill="#fff" stroke="#111" stroke-width=".7"/><path d="M8.800 9.600L12.600 4.600V7.600L8.800 12.400z" fill="#35d6ea" stroke="#111" stroke-width=".6"/><path d="M2.400 8.400L5.600 3.400 7 3.600 4 8.600z" fill="#35d6ea"/><path d="M4.400 6Q4.600 0 8.600 .8Q11.600 1.800 10.600 6.600L8.400 8.600Q9 4 7 3.600Q5.800 4 5.800 7.400z" fill="#f4e840" stroke="#6a6014" stroke-width=".5"/><path d="M9.600 8L12 4.400" stroke="#35d6ea" stroke-width="1.300"/></g>
<path d="M1120.3999999999999 456.09999999999997h4.4l-2.2 2.6z" fill="#000"/>
<g transform="translate(1142.4 422)"><path d="M1 3Q2.400 .2 3.800 3V10Q2.400 11.400 1 10z" fill="none" stroke="#3a3a8a" stroke-width=".7" stroke-dasharray="1.200 .7"/><path d="M8.800 4.400Q10.500 1.400 12.200 4.400V12Q10.500 13.600 8.800 12z" fill="#1a62d8" stroke="#0e1a5a" stroke-width=".8"/><path d="M10 3.400V12.400" stroke="#8adcfa" stroke-width="1"/><path d="M8.800 4.400Q10.500 5.600 12.200 4.400" fill="none" stroke="#0e1a5a" stroke-width=".5"/><path d="M4.600 10.400V12H7" fill="none" stroke="#111" stroke-width="1"/><path d="M8.400 12L6.600 13.200V10.800z" fill="#111"/></g>
<path d="M1155.2 435.09999999999997h4.4l-2.2 2.6z" fill="#000"/>
<path d="M1137.400 441.800H1160.600" stroke="#9c9cb2" stroke-width=".8"/><path d="M1137.400 442.700H1160.600" stroke="#f6f6fb" stroke-width=".8"/>
<g transform="translate(1142.4 447.4)"><path d="M.4 3.400Q2 .4 3.600 3.400V11Q2 12.600 .4 11z" fill="#1a62d8" stroke="#0e1a5a" stroke-width=".8"/><path d="M9.600 4.400Q11.200 1.400 12.800 4.400V12Q11.200 13.600 9.600 12z" fill="#1a62d8" stroke="#0e1a5a" stroke-width=".8"/><path d="M4.400 3.800L9 .8V10.400L4.400 13.400z" fill="#f4ec8a" stroke="#8a8a30" stroke-width=".5"/><path d="M1.500 2.600V11.600M10.700 3.600V12.600" stroke="#8adcfa" stroke-width="1"/><path d="M9.600 7Q11 6 12.800 7V12Q11.200 13.600 9.600 12z" fill="#1a62d8" stroke="#0e1a5a" stroke-width=".6"/><path d="M10.700 7V12.600" stroke="#8adcfa" stroke-width="1"/></g>
<g transform="translate(1142.6000000000001 465.6)"><path d="M2 2H10.800M2 6.400H10.800M2 10.800H10.800M2 2V10.800M6.400 2V10.800M10.800 2V10.800" stroke="#3a3af0" stroke-width=".7"/><circle cx="2.0" cy="2.0" r="1.550" fill="#2222d8"/><circle cx="2.0" cy="6.4" r="1.550" fill="#2222d8"/><circle cx="2.0" cy="10.8" r="1.550" fill="#2222d8"/><circle cx="6.4" cy="2.0" r="1.550" fill="#2222d8"/><circle cx="6.4" cy="6.4" r="1.550" fill="#2222d8"/><circle cx="6.4" cy="10.8" r="1.550" fill="#2222d8"/><circle cx="10.8" cy="2.0" r="1.550" fill="#2222d8"/><circle cx="10.8" cy="6.4" r="1.550" fill="#2222d8"/><circle cx="10.8" cy="10.8" r="1.550" fill="#2222d8"/></g>
<path d="M1155.2 479.09999999999997h4.4l-2.2 2.6z" fill="#000"/>
<path d="M1137.400 486H1160.600" stroke="#9c9cb2" stroke-width=".8"/><path d="M1137.400 486.900H1160.600" stroke="#f6f6fb" stroke-width=".8"/>
<g transform="translate(1142.4 491)"><circle cx="6.500" cy="6.500" r="3.500" fill="#5ad8a8" stroke="#0e2a2a" stroke-width=".9"/><circle cx="6.500" cy="6.500" r="1.700" fill="#f0f4a0"/><path d="M1 3.200V1H3.200M9.800 1H12V3.200M12 9.800V12H9.800M3.200 12H1V9.800" fill="none" stroke="#111" stroke-width="1.100"/><path d="M1.600 1.600L3 3M11.400 1.600L10 3M11.400 11.400L10 10M1.600 11.400L3 10" stroke="#111" stroke-width=".7"/></g>
<path d="M1155.2 504.09999999999997h4.4l-2.2 2.6z" fill="#000"/>
<g transform="translate(1205.4 386.4)"><path d="M.6 5.600Q1 1 6 1L12.600 3.400V9.400L7.400 12.600 .6 9.600z" fill="#e8c8a0" stroke="#3a2a1a" stroke-width=".7"/><path d="M.6 5.600Q3 2.600 7.400 8.400V12.600L.6 9.600z" fill="#2ab8c8" stroke="#0c4a5a" stroke-width=".5"/><path d="M6 1Q9.600 3 7.400 8.400L12.600 5.400V3.400z" fill="#f0a890"/><path d="M1.400 4.600Q3 1.800 6 1.600Q8 4 7 7.600Q4.600 3.800 1.400 4.600z" fill="#f4e890"/></g>
<path d="M1218.2 399.3h4.4l-2.2 2.6z" fill="#000"/>
<g transform="translate(1205.4 405.4)"><path d="M.6 6.600L6.400 1 12.600 3.400V9.400L7.400 12.600 .6 9.600z" fill="#f0b090" stroke="#3a2a1a" stroke-width=".7"/><path d="M.6 6.600L7.400 9V12.600L.6 9.600z" fill="#2ab8c8" stroke="#0c4a5a" stroke-width=".5"/><path d="M.6 6.600L6.400 1 12.600 3.400 7.400 9z" fill="#f4e890" stroke="#3a2a1a" stroke-width=".5"/><path d="M7.400 9L12.600 3.400V9.400L7.400 12.600z" fill="#e8c8a0" stroke="#3a2a1a" stroke-width=".5"/></g>
<g transform="translate(1205.4 424.4)"><path d="M1.400 3.600L7 .6 12.600 2.400 11.400 10 6 13 .6 10.600z" fill="#f2e83a" stroke="#2a2a1a" stroke-width=".7"/><path d="M1.400 3.600L7 .6 12.600 2.400 7.400 5.400z" fill="#35d6ea" stroke="#0c5a6a" stroke-width=".5"/><path d="M7.400 5.400L12.600 2.400 11.400 10 6 13z" fill="#3a3a4a"/></g>
<path d="M1218.2 437.3h4.4l-2.2 2.6z" fill="#000"/>
<g transform="translate(1205.4 443.4)"><path d="M.6 6L6 .6 12.600 3.400 12 8.400 6.400 13 .6 10z" fill="#1a7a8a" stroke="#0a2a3a" stroke-width=".7"/><path d="M2 6.400L6.400 2.200 11 4.200 6.800 8.800z" fill="#0a1a3a"/><path d="M3.600 7L6.800 4 9.600 5.200 6.800 8.200z" fill="#f4e850"/><path d="M.6 6L6.800 8.800 6.400 13 .6 10z" fill="#35d6ea" stroke="#0a2a3a" stroke-width=".5"/></g>
<g transform="translate(1205.4 462)"><path d="M.6 4L5 1.400H12.600V9.400L8.400 12.600H.6z" fill="#e8f4fa" stroke="#2a4a9a" stroke-width=".7"/><path d="M.6 4H8.400V12.600M8.400 4L12.600 1.400M4.400 4V12.600M.6 8H8.400M5 1.400V4" fill="none" stroke="#2a4a9a" stroke-width=".6"/><path d="M4.400 4H8.400V8H4.400z" fill="#8adcf0"/><path d="M8.400 4L12.600 1.400V6L8.400 8z" fill="#f4ec9a"/></g>
<g transform="translate(1205.4 481.2)"><circle cx="6.500" cy="6.500" r="5.200" fill="#f4ec8a" stroke="#111" stroke-width=".9"/><circle cx="6.500" cy="6.500" r="2.600" fill="none" stroke="#111" stroke-width=".8"/><path d="M6.500 0V13M0 6.500H13" stroke="#111" stroke-width=".8"/></g>
<g transform="translate(1205.4 499.4)"><path d="M.6 6L6 2.600 12.600 4.400V9.600L7.200 13 .6 10.800z" fill="#f4ea20" stroke="#2a2a1a" stroke-width=".7"/><path d="M.6 6L6 2.600 12.600 4.400 7.200 7.800z" fill="#0e8c8c" stroke="#0c3a3a" stroke-width=".5"/><path d="M.6 6L7.200 7.800V13L.6 10.800z" fill="#f2d420"/><path d="M1 6.600L6.800 12.400M6.800 8.200L1 10.600" stroke="#f0301a" stroke-width="1.500"/><path d="M7.200 7.800L12.600 4.400V9.600L7.200 13z" fill="#f6f020" stroke="#2a2a1a" stroke-width=".4"/></g>
<path d="M1218.2 512.7h4.4l-2.2 2.6z" fill="#000"/>
<rect x="1172" y="587.6" width="2.800" height="2.800" fill="#10207a"/><path d="M1173.4 589.0h1.400v1.400h-1.400z" fill="#2ab8e8" opacity=".7"/>
<path d="M1179.3999999999999 595.9000000000001h4.4l-2.2 2.6z" fill="#000"/>
</svg>
<svg class="a" width="1267" height="713" viewBox="0 0 1267 713">
<path d="M1245.5 59H1256.1" stroke="#fff" stroke-width="1.100"/><path d="M1246.1 59.9H1256.6999999999998" stroke="#a4a4ba" stroke-width=".7"/>
<g transform="translate(1248 64)"><path d="M0 0V16L15.600 9.600z" fill="#9adcc2"/><g transform="translate(6.800 7.200)"><path d="M0-5L1.200-3.400 3.500-3.500 3.400-1.200 5 0 3.400 1.200 3.500 3.500 1.200 3.400 0 5-1.200 3.400-3.500 3.500-3.400 1.200-5 0-3.400-1.200-3.500-3.500-1.200-3.400z" fill="#3a3a40" stroke="#222" stroke-width=".5"/><circle r="2.700" fill="#e8e8ea"/><circle r="1.300" fill="#55555a"/></g></g>
<path d="M1245.5 90.4H1256.1" stroke="#fff" stroke-width="1.100"/><path d="M1246.1 91.30000000000001H1256.6999999999998" stroke="#a4a4ba" stroke-width=".7"/>
<g transform="translate(1248.5 98)"><path d="M6.400 2.600Q9.600 1.400 12.600 2.600V11.200Q9.600 12.800 6.400 11.200z" fill="#b6b6c6"/><ellipse cx="9.500" cy="2.800" rx="3.100" ry="1.300" fill="#f2f2f8"/><g fill="none" stroke="#a2a2b4" stroke-width=".9"><path d="M1 2.400H5V5H1zM3 5V11H6M1 7.400H5V10H1z"/></g><path d="M1.600 3H5.600M1.600 8H5.600" stroke="#f2f2f8" stroke-width=".7"/></g>
<g transform="translate(1248.5 116.6)"><path d="M6.400 2.600Q9.600 1.400 12.600 2.600V11.200Q9.600 12.800 6.400 11.200z" fill="#b6b6c6"/><ellipse cx="9.500" cy="2.800" rx="3.100" ry="1.300" fill="#f2f2f8"/><g fill="none" stroke="#a2a2b4" stroke-width=".9"><path d="M1 2.400H5V5H1zM3 5V11H6M1 7.400H5V10H1z"/></g><path d="M1.600 3H5.600M1.600 8H5.600" stroke="#f2f2f8" stroke-width=".7"/></g>
<g transform="translate(1248.5 134.8)"><path d="M6.400 2.600Q9.600 1.400 12.600 2.600V11.200Q9.600 12.800 6.400 11.200z" fill="#b6b6c6"/><ellipse cx="9.500" cy="2.800" rx="3.100" ry="1.300" fill="#f2f2f8"/><g fill="none" stroke="#a2a2b4" stroke-width=".9"><path d="M1 2.400H5V5H1zM3 5V11H6M1 7.400H5V10H1z"/></g><path d="M1.600 3H5.600M1.600 8H5.600" stroke="#f2f2f8" stroke-width=".7"/></g>
<g transform="translate(1248.5 153.6)"><path d="M6.400 2.600Q9.600 1.400 12.600 2.600V11.200Q9.600 12.800 6.400 11.200z" fill="#b6b6c6"/><ellipse cx="9.500" cy="2.800" rx="3.100" ry="1.300" fill="#f2f2f8"/><g fill="none" stroke="#a2a2b4" stroke-width=".9"><path d="M1 2.400H5V5H1zM3 5V11H6M1 7.400H5V10H1z"/></g><path d="M1.600 3H5.600M1.600 8H5.600" stroke="#f2f2f8" stroke-width=".7"/></g>
<path d="M1245.5 175.5H1256.1" stroke="#fff" stroke-width="1.100"/><path d="M1246.1 176.4H1256.6999999999998" stroke="#a4a4ba" stroke-width=".7"/>
<g transform="translate(1252 185.6)"><path d="M0 0V11.400L2.800 8.800 5 13 7.200 12 5.200 7.800H9z" fill="#f28a1e" stroke="#fff" stroke-width=".9" stroke-linejoin="round"/></g>
<path d="M1261.0 197.29999999999998h4.4l-2.2 2.6z" fill="#000"/>
<path d="M1245.5 206.8H1256.1" stroke="#fff" stroke-width="1.100"/><path d="M1246.1 207.70000000000002H1256.6999999999998" stroke="#a4a4ba" stroke-width=".7"/>
<g transform="translate(1248 214.4)"><path d="M.6 2.600H10.400L13.400 11H.6z" fill="#fff" stroke="#15154e" stroke-width=".8"/><path d="M.6 11H13.400V12.600H.6z" fill="#15154e"/><circle cx="4.600" cy="8" r="2.300" fill="none" stroke="#3aa83a" stroke-width=".9"/><path d="M4 9.600L10.400 .6 11.800 1.400 5.400 10.400z" fill="#2a4ad0" stroke="#15154e" stroke-width=".4"/><path d="M4 9.600L3.600 11 5.400 10.400z" fill="#e8d85a"/></g>
<path d="M1261.0 228.29999999999998h4.4l-2.2 2.6z" fill="#000"/>
<path d="M1245.5 238H1256.1" stroke="#fff" stroke-width="1.100"/><path d="M1246.1 238.9H1256.6999999999998" stroke="#a4a4ba" stroke-width=".7"/>
<g transform="translate(1248.8 245.6)"><path d="M3.800 0H13V12.600H9.800V3.200H3.800z" fill="#15154e"/><path d="M3.800 3.200H9.800V12.200H3.800z" fill="#fafaff"/><path d="M2.600 12.300H10.200" stroke="#15154e" stroke-width=".8"/><path d="M0 6.200l1.600-1.600H6.400L5 6.200z" fill="#fbf6b0" stroke="#6a6420" stroke-width=".4"/><path d="M0 6.200H5V10.600H0z" fill="#f2e66a" stroke="#6a6420" stroke-width=".5"/><path d="M5 6.200l1.400-1.600v4.400l-1.400 1.600z" fill="#b8a62e"/></g>
<path d="M1261.0 259.3h4.4l-2.2 2.6z" fill="#000"/>
<g transform="translate(1248.8 266)"><path d="M0 1.400L1.600 0H13V11.200L11.200 12.800H0z" fill="#15154e"/><path d="M.8 2H10.800V12H.8z" fill="#f2e66a"/><path d="M3.400 4.200H8.600V9.800H3.400z" fill="#15154e"/><path d="M5.800 4.200H8.600V7H5.800z" fill="#f2e66a"/><path d="M3.400 4.200H5.800V7H8.600V9.800H3.400z" fill="#d8d8ee"/></g>
<path d="M1261.0 279.3h4.4l-2.2 2.6z" fill="#000"/>
<g transform="translate(1248.8 285.6)"><path d="M.6 5Q.6 .8 5.600 .6V9.600Q4.600 12 2 11.400Q.6 9 .6 5z" fill="#15154e"/><path d="M12.600 5Q12.600 .8 7.600 .6V9.600Q8.600 12 11.200 11.400Q12.600 9 12.600 5z" fill="#15154e"/><path d="M2.400 3.600Q3.600 2.400 5.600 2.600V9.400Q4.400 10.600 3.200 10Q2.200 7 2.400 3.600z" fill="#2a9ab0"/><path d="M10.800 3.600Q9.600 2.400 7.600 2.600V9.400Q8.800 10.600 10 10Q11 7 10.800 3.600z" fill="#f2e66a"/><path d="M5.600 .6V9.600M7.600 .6V9.600" stroke="#15154e" stroke-width=".8"/><path d="M.6 5Q.6 .8 5.600 .6M12.600 5Q12.600 .8 7.600 .6" fill="none" stroke="#15154e" stroke-width=".9"/></g>
<g transform="translate(1248.8 303.6)"><path d="M.4 3V10Q6.500 14 12.600 10V3z" fill="#f2e66a" stroke="#15154e" stroke-width=".8"/><ellipse cx="6.500" cy="3" rx="6.100" ry="2.500" fill="#35d6ea" stroke="#15154e" stroke-width=".8"/><path d="M5 6.400L12.600 5V9.600L5 9.600z" fill="#15154e"/><path d="M6.400 7.400L11.600 6.600V8.800H6.400z" fill="#c8364a"/><path d="M8 7.800l3.600-.6v1.600H8z" fill="#2a9ab0"/></g>
<g transform="translate(1248.8 322.7)"><path d="M0 1.600L1.800 0H13V11.400L11.200 13.200H0z" fill="#15154e"/><path d="M.8 2.400H10.600V12.400H.8z" fill="#f2e66a"/><circle cx="5.700" cy="7.400" r="2.900" fill="#8a8ac8" stroke="#15154e" stroke-width="1.100"/><circle cx="5" cy="6.800" r="1.100" fill="#d8d8f4"/></g>
<g transform="translate(1248.8 341.8)"><path d="M.6 9.400L3.600 6H10.200L7.400 9.400z" fill="#fff" stroke="#111" stroke-width=".7"/><path d="M.6 9.400H7.400V12.400H.6z" fill="#fff" stroke="#111" stroke-width=".7"/><path d="M7.400 9.400L12.800 4V7L7.400 12.400z" fill="#fff" stroke="#111" stroke-width=".7"/><path d="M2.600 6.400L8.800 .8 12.600 1.400 6.400 7.200z" fill="#f2e66a" stroke="#4a4410" stroke-width=".6"/><path d="M6.400 7.200L12.600 1.400V3.400L6.600 9z" fill="#fbf8c8" stroke="#4a4410" stroke-width=".5"/><path d="M2.600 6.400L6.400 7.200 6.600 9 2.600 8z" fill="#e4d24a"/></g>
<g transform="translate(1248.8 359.2)"><path d="M.6 7.600L6 1H12.600L7.400 7.600z" fill="#f2e66a" stroke="#15154e" stroke-width=".8"/><path d="M3.600 7.600L8 2.200 10.400 2.200 6 7.600z" fill="#35d6ea"/><path d="M.6 7.600H7.400V12.400H.6z" fill="#fff" stroke="#15154e" stroke-width=".9"/><path d="M7.400 7.600L12.600 1V6.400L7.400 12.400z" fill="#15154e" stroke="#15154e" stroke-width=".8"/><path d="M2.600 8.600H5.400V12H2.600z" fill="#c8c8e0"/></g>
<g transform="translate(1249.3999999999999 378.6)"><path d="M1 3.200L6 .6 11.600 2.800 6.600 5.600z" fill="#35d6ea" stroke="#0c6a78" stroke-width=".5"/><path d="M1 3.200L6.600 5.600V11.400L1 8.600z" fill="#f4e840" stroke="#6a6420" stroke-width=".5"/><path d="M6.600 5.600L11.600 2.800V8.600L6.600 11.400z" fill="#0a0a0a"/><path d="M8 6.600L10.400 5.400V8L8 9.200z" fill="#f4f4f4"/><path d="M8.600 7L10.400 6.200V8L8.600 8.800z" fill="#0a0a0a"/></g>
<path d="M1261.0 391.3h4.4l-2.2 2.6z" fill="#000"/>
<g transform="translate(1248.8 397.8)"><path d="M.6 9.600L4.600 4.600H12.600L8.800 9.600z" fill="#fff" stroke="#111" stroke-width=".7"/><path d="M.6 9.600H8.800V12.400H.6z" fill="#fff" stroke="#111" stroke-width=".7"/><path d="M8.800 9.600L12.600 4.600V7.600L8.800 12.400z" fill="#35d6ea" stroke="#111" stroke-width=".6"/><path d="M2.400 8.400L5.600 3.400 7 3.600 4 8.600z" fill="#35d6ea"/><path d="M4.400 6Q4.600 0 8.600 .8Q11.600 1.800 10.600 6.600L8.400 8.600Q9 4 7 3.600Q5.800 4 5.800 7.400z" fill="#f4e840" stroke="#6a6014" stroke-width=".5"/><path d="M9.600 8L12 4.400" stroke="#35d6ea" stroke-width="1.300"/></g>
<g transform="translate(1248.8 418.4)"><path d="M.6 8.600L4.200 4H12.600L9 8.600z" fill="#fff" stroke="#111" stroke-width=".7"/><path d="M.6 8.600H9V12.600H.6z" fill="#fff" stroke="#111" stroke-width=".7"/><path d="M9 8.600L12.600 4V8L9 12.600z" fill="#e8e8f0" stroke="#111" stroke-width=".6"/><path d="M3 5.600Q4 11.800 7.600 11.600Q10.600 10 11.400 3.600L9 2.600Q8.400 7 6.600 7.600Q5.400 7 5.200 4.600z" fill="#35d6ea" stroke="#0c6a78" stroke-width=".5"/><path d="M3 5.600L5.200 4.600M11.400 3.600L9 2.600M11.800 1.200L10 5.600" stroke="#f4e840" stroke-width="1.200"/></g>
<path d="M1245.5 437.5H1256.1" stroke="#fff" stroke-width="1.100"/><path d="M1246.1 438.4H1256.6999999999998" stroke="#a4a4ba" stroke-width=".7"/>
<g transform="translate(1248.8 445)"><path d="M.6 7.400L1.200 10 8.400 12.400 12.600 8.400 12.400 5.600z" fill="#f2e66a" stroke="#8a7e20" stroke-width=".5"/><path d="M.8 8.800L8.400 11 12.400 7" fill="none" stroke="#a89a2a" stroke-width=".6"/><path d="M.6 5.600Q2 2 4.400 1.200Q8 2.600 12.400 2.200L12.400 5.600Q10 8.400 8.200 9.400Q4 9 .6 7.400z" fill="#35d6ea" stroke="#0c7a8a" stroke-width=".5"/></g>
<path d="M1261.0 459.3h4.4l-2.2 2.6z" fill="#000"/>
<path d="M1245.5 468.7H1256.1" stroke="#fff" stroke-width="1.100"/><path d="M1246.1 469.59999999999997H1256.6999999999998" stroke="#a4a4ba" stroke-width=".7"/>
<g transform="translate(1248.4 476.8)"><g fill="none" stroke="#b4b4c4" stroke-width="1"><path d="M2 1V12.400M2 4H9M5 4V12.400H12.600M9 2V9H12.600V2M2 8H5"/></g><path d="M3 1.600V12M6 5V11.600" stroke="#f4f4fa" stroke-width=".8"/></g>
<g transform="translate(1248 491.6)"><rect x="1" y="5.800" width="8.400" height="10" fill="#35d6ea" stroke="#14707e" stroke-width=".7"/><path d="M2.600 9L6 7.200 8 10 5.600 13z" fill="#8ae6f0"/><rect x=".8" y="3.300" width="9" height="1.500" fill="#f4ea5a" stroke="#15154e" stroke-width=".35"/><path d="M.9 2.300V5.400M9.700 2.300V5.400" stroke="#15154e" stroke-width=".8"/><rect x="11" y="6.600" width="1.500" height="8.600" fill="#f4ea5a" stroke="#15154e" stroke-width=".35"/><path d="M10.200 6.500H13.400M10.200 15.300H13.400" stroke="#15154e" stroke-width=".8"/></g>
<path d="M1245.5 516.4H1256.1" stroke="#fff" stroke-width="1.100"/><path d="M1246.1 517.3H1256.6999999999998" stroke="#a4a4ba" stroke-width=".7"/>
<g transform="translate(1248.8 524.4)"><path d="M2.600 2.600L6.400 .4 12.600 3.400V8.400L8.600 10.600 2.600 7.600z" fill="#f2e66a" stroke="#3a3a6a" stroke-width=".6"/><path d="M7.600 5.600L12.600 3.400V8.400L8.600 10.600z" fill="#5a5a8a"/><path d="M7 4.400l3.400 1.400v3l-3.400-1.400z" fill="#9a9ab8"/><ellipse cx="3.600" cy="9.600" rx="3" ry="3.600" fill="#fbf6a8" stroke="#7a7018" stroke-width=".6"/><path d="M3.600 6L9.600 8.200V12.600L3.600 13.200z" fill="#f2e66a" stroke="#7a7018" stroke-width=".5"/><ellipse cx="3.600" cy="9.600" rx="2.600" ry="3.400" fill="#fbf6a8" stroke="#7a7018" stroke-width=".6"/></g>
<path d="M1245 542.6H1267" stroke="#a2a2b8" stroke-width=".9"/><path d="M1245 543.5H1267" stroke="#f6f6fb" stroke-width=".9"/>
<g transform="translate(1248.8 548.4)"><path d="M3 2.400L7 .4 13 3V8L9.400 10 3 7.400z" fill="#f2e66a" stroke="#e02a1a" stroke-width=".8"/><path d="M8 5.400L13 3V8L9.400 10z" fill="#2a2a2a"/><path d="M7.400 3.800l3.800 1.400-.2 2.200-3.600-1z" fill="#f4b020"/><path d="M4 5.600L10 7.800V12.200L4 13z" fill="#f8c8a0" stroke="#e02a1a" stroke-width=".7"/><ellipse cx="3.800" cy="9.400" rx="3" ry="3.600" fill="#fdf2c0" stroke="#e02a1a" stroke-width=".8"/><path d="M9.400 8V12" stroke="#e02a1a" stroke-width=".8"/></g>
<path d="M1261.0 562.3000000000001h4.4l-2.2 2.6z" fill="#000"/>
<g transform="translate(1248.8 568.2)"><path d="M3.600 2.400L7.600 .4 12.600 2.600V11L9 13 3.600 10.600z" fill="#35d6ea" stroke="#0c6a9a" stroke-width=".7"/><path d="M8.600 5L12.600 2.600V11L9 13z" fill="#1a8ac0"/><path d="M4 5.600L10.600 7V11.400L4 12.800z" fill="#f8c8a0" stroke="#e02a1a" stroke-width=".7"/><path d="M10.600 6.400Q13 8 12.400 10.400Q11.600 11.600 10.600 11.400z" fill="#fbe890" stroke="#e02a1a" stroke-width=".6"/><ellipse cx="3.600" cy="9.200" rx="3" ry="3.600" fill="#fdf2c0" stroke="#e02a1a" stroke-width=".8"/></g>
<path d="M1245 585H1267" stroke="#a2a2b8" stroke-width=".9"/><path d="M1245 585.9H1267" stroke="#f6f6fb" stroke-width=".9"/>
<g transform="translate(1248 592.2)"><ellipse cx="10" cy="4.600" rx="3.400" ry="3.800" fill="#0e9a9a" stroke="#15404a" stroke-width=".6"/><ellipse cx="12" cy="4" rx="1.600" ry="3" fill="#f4ec8a"/><ellipse cx="3.600" cy="8.400" rx="3.200" ry="3.600" fill="#fbf6b8" stroke="#4a4a7a" stroke-width=".6"/><ellipse cx="6" cy="7.800" rx="1.400" ry="2.800" fill="#e8dc5a"/><path d="M6.600 7L8 6" stroke="#2a3a9a" stroke-width=".8"/></g>
</svg>
<svg class="a" width="1267" height="713" viewBox="0 0 1267 713">
<defs><linearGradient id="gRain" x1="0" y1="0" x2="1" y2="0"><stop offset="0" stop-color="#1a5ae0"/><stop offset=".3" stop-color="#2ad8e8"/><stop offset=".5" stop-color="#f4e83a"/><stop offset=".7" stop-color="#f0202a"/><stop offset="1" stop-color="#1a8ae0"/></linearGradient>
<radialGradient id="gBall" cx=".35" cy=".35" r=".7"><stop offset="0" stop-color="#c8f4ff"/><stop offset="1" stop-color="#1a7ae0"/></radialGradient></defs>
<path d="M4.5 649V659.5" stroke="#fff" stroke-width="1.100"/><path d="M5.5 649.5V660.0" stroke="#9a9ab0" stroke-width=".8"/>
<path d="M14.600 653.400H21.400L24.400 656.400V665.400H14.600z" fill="#ffffd2" stroke="#4a4a3a" stroke-width=".8"/><path d="M21.400 653.400V656.400H24.400" fill="#fff" stroke="#4a4a3a" stroke-width=".7"/><path d="M16.400 655.400L20 659" stroke="#fff" stroke-width="1.200"/>
<path d="M31.400 656.400H35L36.400 657.600H41.600V664.400H31.400z" fill="#d8a800" stroke="#6a5000" stroke-width=".7"/><path d="M31.400 664.400L34.400 659.400H44.600L41.600 664.400z" fill="#f4d040" stroke="#6a5000" stroke-width=".7"/><path d="M39.600 655.400Q41.600 653.400 43.400 655.600" fill="none" stroke="#222" stroke-width=".8"/><path d="M44.400 656.600L42 656.200 43.800 654.400z" fill="#222"/>
<rect x="50.400" y="653.400" width="11.400" height="11.600" fill="#b8b414" stroke="#2a2a08" stroke-width=".9"/><rect x="52.600" y="653.800" width="7" height="5" fill="#e4f0fc" stroke="#6a8ac8" stroke-width=".5"/><path d="M52.600 655.600H59.600" stroke="#8ab0e8" stroke-width=".8"/><rect x="53.400" y="660.800" width="5.800" height="4.200" fill="#0a0a0a"/><rect x="57" y="661.600" width="1.600" height="2.800" fill="#e8e8e8"/>
<path d="M70.600 658.400L74 653.400H80.600L78 658.400z" fill="#dce8fc" stroke="#5a6a9a" stroke-width=".6"/><path d="M72.600 657L75 654.200H79L77 657z" fill="#6a9af0"/><path d="M68.400 659.400L70.400 657.600H80.400L81.400 659.400V663.400L79.400 665H68.400z" fill="#a8a428" stroke="#3a3a08" stroke-width=".8"/><path d="M68.400 661.400H79.400V665" fill="none" stroke="#3a3a08" stroke-width=".6"/><rect x="74" y="660" width="3.600" height="1" fill="#3ad84a"/><path d="M69.400 663H78.400" stroke="#e8e8a0" stroke-width=".9"/>
<path d="M89.600 653.400L95.600 662M96.800 653.400L90.800 662" stroke="#b0b0c0" stroke-width="1.300"/><ellipse cx="90.400" cy="663.400" rx="1.900" ry="2.200" fill="none" stroke="#b0b0c0" stroke-width="1.200"/><ellipse cx="96.200" cy="663.400" rx="1.900" ry="2.200" fill="none" stroke="#b0b0c0" stroke-width="1.200"/><path d="M90.600 654L96 661.600" stroke="#f4f4f8" stroke-width=".6"/>
<path d="M105.600 653.600H111L113 655.600V662H105.600z" fill="#d8d8e6" stroke="#b0b0c0" stroke-width=".9"/><path d="M109.600 657.600H115L117.400 660V666H109.600z" fill="#dedeea" stroke="#b0b0c0" stroke-width=".9"/><path d="M111.400 660.600H115.400M111.400 662.400H115.400M111.400 664.200H115.400" stroke="#b0b0c0" stroke-width=".6"/>
<path d="M123.600 655H133.600V664.400H123.600z" fill="#9a9630" stroke="#3a3a10" stroke-width=".8"/><path d="M126.600 653.400H130.600V656H126.600z" fill="#e8c840" stroke="#3a3a10" stroke-width=".6"/><path d="M129 659.400H136V666H129z" fill="#f4f4fc" stroke="#222" stroke-width=".7"/><path d="M130 662.600H135.400V665.400H130z" fill="#2a4ae8"/>
<path d="M144.600 661Q143 655 149 655.400Q154 656.400 153 662.600" fill="none" stroke="#b0b0c0" stroke-width="1.500"/><path d="M142.400 659.600L147.600 659.400 144.600 663.600z" fill="#b0b0c0"/><path d="M145.400 660Q144.600 656.400 149 656.400" fill="none" stroke="#f4f4f8" stroke-width=".7"/>
<path d="M154.4 666.3000000000001h4.4l-2.2 2.6z" fill="#000"/>
<path d="M172.600 661Q174.200 655 168.200 655.400Q163.200 656.400 164.200 662.600" fill="none" stroke="#b0b0c0" stroke-width="1.500"/><path d="M174.800 659.600L169.600 659.400 172.600 663.600z" fill="#b0b0c0"/><path d="M171.800 660Q172.600 656.400 168.200 656.400" fill="none" stroke="#f4f4f8" stroke-width=".7"/>
<path d="M174.4 666.3000000000001h4.4l-2.2 2.6z" fill="#000"/>
<path d="M182 654.400V663L184 661.200 185.600 665 187 664.400 185.600 660.800H188z" fill="#f0e040" stroke="#1a3ab0" stroke-width=".8" stroke-linejoin="round"/><text x="186.800" y="665.600" font-size="13.600" font-weight="bold" fill="#121a80" font-family="Liberation Sans">?</text>
<path d="M205 649V659.5" stroke="#fff" stroke-width="1.100"/><path d="M206 649.5V660.0" stroke="#9a9ab0" stroke-width=".8"/>
<text x="211.600" y="664" font-size="13" font-style="italic" font-family="Liberation Serif" fill="#0a0a0a" font-weight="bold">f</text><text x="217.600" y="664.400" font-size="6.400" font-weight="bold" fill="#0a0a0a" font-family="Liberation Sans">(x)</text>
<path d="M237.600 653.400Q244 653.400 244 658Q244 662.400 237.600 662.400Q236 662.400 235 662L232 665 233 661.200Q231.200 660 231.200 658Q231.200 653.400 237.600 653.400z" fill="#f4f4f8" stroke="#0a0a0a" stroke-width="1.100"/><path d="M234.600 657Q237.600 655 240.600 657M234.600 659.400Q237.600 657.600 240.600 659.400" fill="none" stroke="#6a6a7a" stroke-width=".7"/>
<ellipse cx="254" cy="656.600" rx="2" ry="2.600" fill="none" stroke="#c0c0d0" stroke-width="1.200"/><ellipse cx="254" cy="661.400" rx="2" ry="2.600" fill="none" stroke="#c0c0d0" stroke-width="1.200"/>
<rect x="265" y="653" width="11.400" height="2.600" fill="#1a2ae0"/><rect x="265" y="655.600" width="11.400" height="8.800" fill="#fff" stroke="#0a0a0a" stroke-width=".8"/><path d="M267.300 655.600V664.400M269.600 655.600V664.400M271.900 655.600V664.400M274.200 655.600V664.400M265 657.800H276.400M265 660H276.400M265 662.200H276.400" stroke="#0a0a0a" stroke-width=".8"/>
<path d="M276.40000000000003 666.3000000000001h4.4l-2.2 2.6z" fill="#000"/>
<rect x="284.400" y="658" width="3.400" height="4.400" fill="#f4e060" stroke="#2a3ab0" stroke-width=".7"/><path d="M288 660L292 655.600M288 660H292M288 660L292 664.600" stroke="#222" stroke-width=".7"/><rect x="293.600" y="653.600" width="3" height="2.600" fill="#4ac8f8" stroke="#1a3ae0" stroke-width=".6"/><rect x="293.600" y="658.600" width="3" height="2.600" fill="#4ac8f8" stroke="#1a3ae0" stroke-width=".6"/><rect x="293.600" y="663.400" width="3" height="2.600" fill="#4ac8f8" stroke="#1a3ae0" stroke-width=".6"/><rect x="291" y="656.600" width="1.400" height="1.400" fill="#e02a2a"/><rect x="291" y="662.600" width="1.400" height="1.400" fill="#e02a2a"/>
<path d="M306.400 657.400V655Q306.600 651.800 309.600 651.800Q312.600 651.800 312.800 655V657.400" fill="none" stroke="#2e2e30" stroke-width="2"/><path d="M307.300 657V655.200Q307.400 653 309.600 653" fill="none" stroke="#8a8a8e" stroke-width=".7"/><path d="M304.200 657.200H313.600L315.200 658.400V664.600L313.600 665.800H304.200z" fill="#3a3a3c" stroke="#111" stroke-width=".7"/><path d="M305 658H311.600V665H305z" fill="#5e5e62"/><path d="M305.400 658.400H307.600V664.600H305.400z" fill="#8a8a8e"/><path d="M309.200 660.200V663" stroke="#0a0a0a" stroke-width="1.300"/>
<path d="M314.8 666.3000000000001h4.4l-2.2 2.6z" fill="#000"/>
<rect x="322.400" y="653.400" width="4.400" height="5" fill="#3ac8d8" stroke="#3a3a4a" stroke-width=".6"/><rect x="322.400" y="660" width="4.400" height="5" fill="#3ac8d8" stroke="#3a3a4a" stroke-width=".6"/><path d="M323 654.200H326.200M323 660.800H326.200" stroke="#e8e040" stroke-width="1"/><path d="M322.600 666.400H327" stroke="#9a9aaa" stroke-width=".7"/><text x="327.400" y="663.600" font-size="11" fill="#0a0a0a" font-family="Liberation Sans">}</text><path d="M332 658.400H335M332 660.600H335" stroke="#0a0a0a" stroke-width=".8"/>
<path d="M345.5 649V659.5" stroke="#fff" stroke-width="1.100"/><path d="M346.5 649.5V660.0" stroke="#9a9ab0" stroke-width=".8"/>
<path d="M353.600 654.600Q354.600 653.800 356 654.600L359.600 657.400 363 654.800 364.800 655 361.600 659 365.600 662.200Q366.400 663.400 365.800 664.400Q364.600 665 363.400 664.400L360.600 662 359.400 665.600 357.800 665.200 358.200 660 356 658.200 353.200 660.400 352.800 659 354.400 656.600z" fill="#3ad0f0" stroke="#0c5ab0" stroke-width=".8" stroke-linejoin="round"/><path d="M355 655.600L364.400 663.400" stroke="#c8f4ff" stroke-width=".8"/>
<rect x="371.400" y="653.400" width="12.400" height="12.200" fill="#f6f08a" stroke="#2ab8c8" stroke-width="1"/><path d="M377.600 655V664M373 659.500H382.200" stroke="#111" stroke-width=".8"/><path d="M377.600 654.400L376.200 656.600H379zM377.600 664.600L376.200 662.400H379zM372.400 659.500L374.600 658.100V660.900zM382.800 659.500L380.600 658.100V660.900z" fill="#111"/>
<path d="M396.600 654V665.400M390.800 659.700H402.400" stroke="#1a2ab8" stroke-width="1.500"/><path d="M396.600 652.600L394 655.800H399.200zM396.600 666.800L394 663.600H399.200zM389.400 659.700L392.600 657.100V662.300zM403.800 659.700L400.600 657.100V662.300z" fill="#1a2ab8"/>
<circle cx="416" cy="661.600" r="4.400" fill="url(#gBall)" stroke="#0c4ab0" stroke-width=".6"/><path d="M408.400 657.400L410.400 657 412 658.600Q414 655.400 418.600 656Q421.600 656.600 421.600 658.600L418 658.800 416.400 660.400 411 661.400 408.400 660.600z" fill="#f8d8c0" stroke="#1a2a6a" stroke-width=".7"/><path d="M408 656.600V661.200" stroke="#1a2ab8" stroke-width="1.200"/>
<path d="M435.4 661L439.79999999999995 665.6" stroke="#1a3a9a" stroke-width="2.200" stroke-linecap="round"/><path d="M435.4 661L439.79999999999995 665.6" stroke="#6ab0f0" stroke-width=".8"/>
<circle cx="432.4" cy="658" r="4.500" fill="#fff" stroke="#14247a" stroke-width="1.300"/>
<path d="M430.0 658H434.79999999999995" stroke="#0a0a0a" stroke-width="1.300"/>
<path d="M432.4 655.600V660.400" stroke="#0a0a0a" stroke-width="1.300"/>
<path d="M453.4 661L457.79999999999995 665.6" stroke="#1a3a9a" stroke-width="2.200" stroke-linecap="round"/><path d="M453.4 661L457.79999999999995 665.6" stroke="#6ab0f0" stroke-width=".8"/>
<circle cx="450.4" cy="658" r="4.500" fill="#fff" stroke="#14247a" stroke-width="1.300"/>
<path d="M448.0 658H452.79999999999995" stroke="#0a0a0a" stroke-width="1.300"/>
<path d="M464.400 664.600L468.400 661H477.400L473.400 664.600z" fill="#1a9aa8" stroke="#0c5a6a" stroke-width=".6"/><path d="M470.600 662.600V655.400" stroke="#f0a060" stroke-width="1.100"/><path d="M470.600 652.800L468.600 656H472.600z" fill="#3a5ae8"/>
<rect x="483.400" y="653.400" width="11.600" height="11.600" fill="#2ad8f4" stroke="#1a2ae0" stroke-width="1.100"/><path d="M489.200 653.400V665M483.400 659.200H495" stroke="#1a2ae0" stroke-width="1"/><rect x="489.800" y="654" width="4.600" height="4.600" fill="#8a9af8"/><path d="M495.600 654.400V665.600H484.400" fill="none" stroke="#5a5a9a" stroke-width=".7"/>
<path d="M501.400 656.600L505 652.600H513.800V661.600L510 665.800H501.400z" fill="#3ad8f4" stroke="#1a3af0" stroke-width="1"/><path d="M501.400 656.600H510V665.800M510 656.600L513.800 652.600" fill="none" stroke="#1a3af0" stroke-width=".9"/><path d="M502.400 657.600H509.200V664.800H502.400z" fill="#5ae4fc"/>
<path d="M513.4 666.3000000000001h4.4l-2.2 2.6z" fill="#000"/>
<path d="M522.400 654.600V662.600Q527.200 666.600 532 662.600V654.600z" fill="#10188a" stroke="#7a7410" stroke-width="1.200"/><path d="M525.400 656V664.400H527.600V656z" fill="#f4e83a"/><path d="M528.400 656V664.200Q530.600 663.600 531.200 662.400V656z" fill="#2a6ae0"/><ellipse cx="527.200" cy="654.600" rx="4.800" ry="2.100" fill="#6ac8f0" stroke="#8a8410" stroke-width="1.200"/>
<rect x="532.600" y="665.600" width="6" height="4" fill="#fff"/>
<path d="M533.4 666.3000000000001h4.4l-2.2 2.6z" fill="#000"/>
<rect x="541.400" y="653.400" width="11.600" height="11.600" fill="#3ad8f4" stroke="#6a6aa0" stroke-width=".9"/><ellipse cx="548.600" cy="657.400" rx="3" ry="1.800" fill="#f4f0b0" stroke="#6a6a3a" stroke-width=".5"/><path d="M543.400 661.600L546.400 659.400 550.400 660.600 547.400 663z" fill="#f4f0b0" stroke="#4a4a3a" stroke-width=".5"/><path d="M543.400 661.600V662.800L547.400 664.200V663z" fill="#3a3a5a"/>
<rect x="559.400" y="653.400" width="11.600" height="11.600" fill="#3ad8f4" stroke="#6a6aa0" stroke-width=".9"/><path d="M561.400 661L564.600 658.600 569 660 565.800 662.600z" fill="#f4f0b0" stroke="#4a4a3a" stroke-width=".5"/><path d="M561.400 661V662.400L565.800 664V662.600z" fill="#3a3a5a"/><path d="M565.800 662.600L569 660V661.400L565.800 664z" fill="#8a8a9a"/>
<path d="M595 649V659.5" stroke="#fff" stroke-width="1.100"/><path d="M596 649.5V660.0" stroke="#9a9ab0" stroke-width=".8"/>
<circle cx="604.400" cy="654.600" r="2.200" fill="#2ac0d8" stroke="#1a6a9a" stroke-width=".5"/><path d="M607 653.800Q613 653 613.400 657.600" fill="none" stroke="#2a3ae0" stroke-width=".9"/><path d="M613.400 659.400L612 656.800H614.800z" fill="#2a3ae0"/><path d="M603 660.600L605 658.800H614.600V663.400L612.600 665.400H603z" fill="#e8e8f0" stroke="#1a1a1a" stroke-width=".8"/><path d="M603 660.600H612.600V665.400M612.600 660.600L614.600 658.800" fill="none" stroke="#1a1a1a" stroke-width=".7"/>
<path d="M626 649V659.5" stroke="#fff" stroke-width="1.100"/><path d="M627 649.5V660.0" stroke="#9a9ab0" stroke-width=".8"/>
<path d="M634 655.400H645.400" stroke="#2a3ae0" stroke-width="1"/><path d="M632.800 655.400L635.800 653.400V657.400zM646.600 655.400L643.600 653.400V657.400z" fill="#2a3ae0"/><rect x="633" y="659.400" width="13.200" height="4.600" fill="#f4c8c0" stroke="#2a5ae0" stroke-width=".8"/><path d="M635.600 660V662M638.200 660V662M640.800 660V662M643.400 660V662" stroke="#2a3a8a" stroke-width=".7"/><path d="M633 665H646.200" stroke="#3ad0e8" stroke-width=".9"/>
<path d="M656 652.800H663.600V664.400H661.200V666H658.800V664.400H661.200V655.400H656z" fill="#4a4a52" stroke="#1a1a1a" stroke-width=".6"/><path d="M657.600 660.600H662V663H657.600z" fill="#5a5a62"/><circle cx="656" cy="658" r="2.600" fill="#2ac8e0" stroke="#1a2ab0" stroke-width=".7"/><path d="M654.600 657.400L656.400 656.400" stroke="#e8f8a0" stroke-width=".8"/>
<path d="M673.200 657.400H680.600V664.600Q677 666 673.200 664.600z" fill="#c8b420" stroke="#4a4208" stroke-width=".8"/><ellipse cx="676.900" cy="657.400" rx="3.700" ry="1.100" fill="#e8d850" stroke="#4a4208" stroke-width=".5"/><circle cx="676.900" cy="654.600" r="1.700" fill="none" stroke="#2a2a2a" stroke-width="1.100"/>
<path d="M693.8 649V659.5" stroke="#fff" stroke-width="1.100"/><path d="M694.8 649.5V660.0" stroke="#9a9ab0" stroke-width=".8"/>
<path d="M701.400 656.400H704L705 654.800H710L711 656.400H714.600V663.600H701.400z" fill="#d0d0d8" stroke="#1a1a1a" stroke-width=".8"/><path d="M701.400 658H714.600" stroke="#3a3a4a" stroke-width="1.400"/><circle cx="708" cy="660.200" r="2.800" fill="#1a1a2a" stroke="#5a5a6a" stroke-width=".7"/><circle cx="707.400" cy="659.600" r=".9" fill="#8a8ad0"/><rect x="702.400" y="655" width="2" height="1.400" fill="#3a3a3a"/>
<path d="M724.5 649V659.5" stroke="#fff" stroke-width="1.100"/><path d="M725.5 649.5V660.0" stroke="#9a9ab0" stroke-width=".8"/>
<path d="M732.400 659L738 656.400 745.400 657.600 739.400 661z" fill="#3ad0e0" stroke="#0c5a8a" stroke-width=".6"/><path d="M732.400 659V663L739.400 665.600V661z" fill="#1ab0c8" stroke="#0c5a8a" stroke-width=".6"/><path d="M739.400 661L745.400 657.600V660.400L739.400 665.600z" fill="#d82a3a"/><path d="M741 661.600L745.400 659V660.400L741 663.600z" fill="#2a3ab0"/><path d="M737.600 658.600V653" stroke="#f4e040" stroke-width="1"/><circle cx="737.600" cy="652.800" r="1" fill="#f4e040"/><path d="M737.600 658.600L733 654.400" stroke="#e02a3a" stroke-width=".9"/><path d="M732.400 653.600L734.600 654 733 655.800z" fill="#e02a3a"/>
<path d="M751.400 654.400Q754.400 652.400 757.600 653.400Q761 652.400 764 653.600Q762.600 658 764 662.600L761.400 665Q760 661 757 660.400Q754 661.400 752.600 664Q753.400 658.600 751.400 654.400z" fill="url(#gRain)" stroke="#1a2a6a" stroke-width=".9"/><path d="M756 655.600Q758 658 757 660.400" stroke="#f0202a" stroke-width="1.400" fill="none"/>
<rect x="769.600" y="652.600" width="12.600" height="12.600" rx="1.500" fill="#f6e8a8" stroke="#7a7ab0" stroke-width=".8"/><circle cx="775.400" cy="658.800" r="3.600" fill="none" stroke="#1a1a4a" stroke-width=".9"/><path d="M775.400 653.400V664.200M770 658.800H780.800" stroke="#1a1a4a" stroke-width=".9"/><circle cx="779" cy="662" r="2.600" fill="#e8e8f4" stroke="#1a1a1a" stroke-width=".8"/><path d="M777.800 662.600L780 661" stroke="#2a3ab0" stroke-width=".8"/><path d="M781 664L783.400 666.400" stroke="#1a2ab0" stroke-width="1.100"/>
<path d="M789 655.400L793 653H801V655.400L797 657.800H789z" fill="#18a8b8" stroke="#0c5a6a" stroke-width=".5"/><path d="M790.600 657.800H797L800 656V659L797 660.800H790.600z" fill="#e02a3a"/><path d="M789 660.800H797L801 658.400V660.800L797 663.200H789z" fill="#f4e040"/><path d="M789 663.200H797L801 660.800V663.200L797 665.600H789z" fill="#18a8b8" stroke="#0c5a6a" stroke-width=".5"/>
<path d="M811 649V659.5" stroke="#fff" stroke-width="1.100"/><path d="M812 649.5V660.0" stroke="#9a9ab0" stroke-width=".8"/>
<path d="M818.400 657.600L823 653H832.600V660.400L828.400 665.600H825L821 664.400 818.400 661z" fill="#f4b8a0" stroke="#c04a1a" stroke-width=".7"/><path d="M818.400 657.600H821.400V661.400H825.400V657.600H828.400V662.600Q826.600 666 823.400 665.600Q819 665 818.400 661z" fill="#f08a1a" stroke="#c83a0a" stroke-width=".9"/><path d="M821.400 657.600L825.600 653.400M825.400 657.600L829.600 653.400M828.400 657.600L832.600 653" stroke="#c04a1a" stroke-width=".6"/>
<path d="M841.8 649V659.5" stroke="#fff" stroke-width="1.100"/><path d="M842.8 649.5V660.0" stroke="#9a9ab0" stroke-width=".8"/>
<path d="M850.400 656.400L859 652.800 860.600 658.600 852 662z" fill="#f4ec7a" stroke="#2a2a1a" stroke-width=".8"/><path d="M852 662L860.600 658.600 864 661.400 855 665.600z" fill="#f4ec7a" stroke="#2a2a1a" stroke-width=".8"/><path d="M853.400 662.600L860 660M854.600 663.800L861.400 661" stroke="#5a5a2a" stroke-width=".6"/><path d="M855 665.600V666.800L864 662.600V661.400" fill="none" stroke="#2a2a1a" stroke-width=".7"/><path d="M856.400 661L863.600 654" stroke="#1a4ae0" stroke-width="1.400"/>
<path d="M862.8 666.3000000000001h4.4l-2.2 2.6z" fill="#000"/>
<path d="M870.400 654.400H873L874 655.400H877.600V659H870.400z" fill="#e8d040" stroke="#4a4208" stroke-width=".6"/><path d="M870.400 659L872 656.600H879L877.600 659z" fill="#f8ec90" stroke="#4a4208" stroke-width=".5"/><path d="M877 653.600Q882 653 883.600 657.400" fill="none" stroke="#2a4ae0" stroke-width=".9"/><path d="M884.400 659L882 657.400 884.600 656.200z" fill="#2a4ae0"/><path d="M872.400 661.600L877 659.400 884.400 661 879.600 663.600z" fill="#f4ec7a" stroke="#2a3ad0" stroke-width=".7"/><path d="M872.400 661.600V663.400L879.600 665.600 884.400 662.800V661" fill="#e8dc50" stroke="#2a3ad0" stroke-width=".7"/>
<path d="M882.8 666.3000000000001h4.4l-2.2 2.6z" fill="#000"/>
<path d="M1241.800 647.400Q1248.800 646.600 1248.400 648.800Q1247.600 650.800 1243.800 652.200" fill="none" stroke="#e23a3a" stroke-width="1.400"/>
<path d="M1240.200 653Q1245.800 652.200 1244.800 655.600Q1243 660.200 1237 660.200Z" fill="none" stroke="#4a2f9a" stroke-width="1.600"/>
<path d="M1252.400 651.800Q1247.600 651 1247.200 653.800Q1247.400 655.400 1249.800 656Q1252 656.800 1250 658.600Q1248 659.400 1246 658.600" fill="none" stroke="#f0a21e" stroke-width="1.400"/>
<text x="1241.400" y="665.800" font-size="6.200" font-weight="bold" font-style="italic" fill="#3a2f9a" stroke="#3a2f9a" stroke-width=".2" textLength="21.600" lengthAdjust="spacingAndGlyphs" font-family="Liberation Sans">CATIA</text>
<text x="2.9" y="681.1" font-size="7.95" fill="#15151c" font-family="'Liberation Sans','Noto Sans CJK SC',sans-serif">选择对象或命令</text>
<rect x="1024.600" y="672" width="196.600" height="13.200" fill="#fff"/><path d="M1024.600 685.200V672.400H1221.200" fill="none" stroke="#7c7c8c" stroke-width=".9"/><path d="M1025.600 684.400V673.400H1220.400" fill="none" stroke="#4a4a58" stroke-width=".6" opacity=".6"/>
<rect x="1223" y="672" width="21" height="13.400" fill="#dadbee" stroke="#f8f8fc" stroke-width=".8"/><path d="M1223 685.400H1244V672" fill="none" stroke="#9c9cb4" stroke-width=".8"/>
<rect x="1245" y="672" width="21" height="13.400" fill="#dadbee" stroke="#f8f8fc" stroke-width=".8"/><path d="M1245 685.400H1266V672" fill="none" stroke="#9c9cb4" stroke-width=".8"/>
<path d="M1231 676.400H1236.600V681.400H1231zM1236.600 678.400H1238.600V683H1233V681.400" fill="none" stroke="#a8a8bc" stroke-width="1"/><path d="M1231.800 677.200H1237.400V682" fill="none" stroke="#fafafc" stroke-width=".6"/>
<rect x="1251.400" y="676.400" width="8.600" height="6" fill="none" stroke="#a8a8bc" stroke-width="1"/><circle cx="1255.700" cy="679.400" r="1.800" fill="none" stroke="#a8a8bc" stroke-width=".9"/><path d="M1252.200 677.200H1260.800V683" fill="none" stroke="#fafafc" stroke-width=".6"/>
</svg>
<style>
.tbtn{position:absolute;top:687px;height:26px;box-sizing:border-box;border:1px solid rgba(20,12,18,.75);border-bottom:none;border-radius:2px 2px 0 0;box-shadow:inset 0 0 0 1px rgba(255,255,255,.22);background:linear-gradient(180deg,rgba(255,255,255,.30) 0,rgba(255,255,255,.16) 45%,rgba(255,255,255,.04) 50%,rgba(255,255,255,.10) 100%)}
.tbtn.act{background:linear-gradient(180deg,rgba(255,255,255,.52) 0,rgba(255,255,255,.36) 45%,rgba(255,255,255,.22) 50%,rgba(255,255,255,.34) 100%)}
</style>
<div class="a" style="left:0;top:686px;width:1267px;height:1px;background:rgba(60,40,55,.35)"></div>
<div class="a" style="left:0;top:687px;width:1267px;height:1px;background:rgba(255,255,255,.18)"></div>
<div class="tbtn" style="left:121px;width:39px"></div>
<div class="tbtn" style="left:162px;width:39.400000000000006px"></div>
<div class="tbtn" style="left:203.4px;width:38.400000000000006px"></div>
<div class="tbtn act" style="left:243.8px;width:38.39999999999998px"></div>
<div class="tbtn" style="left:284.6px;width:38.799999999999955px"></div>
<div class="a" style="left:1258px;top:687px;width:9px;height:26px;box-sizing:border-box;border-left:1px solid rgba(40,25,38,.7);box-shadow:inset 1px 0 0 rgba(255,255,255,.35);background:linear-gradient(180deg,rgba(255,255,255,.28),rgba(255,255,255,.08) 50%,rgba(255,255,255,.14))"></div>
<div class="t" style="left:1211px;top:689.800px;width:42px;text-align:center;font-size:8.300px;color:#fff">22:05</div>
<div class="t" style="left:1211px;top:701.400px;width:42px;text-align:center;font-size:8.300px;color:#fff">2018/5/11</div>
<svg class="a" width="1267" height="713" viewBox="0 0 1267 713">
<defs>
<radialGradient id="gOrb" cx=".5" cy=".45" r=".6"><stop offset="0" stop-color="#6ad0f8"/><stop offset=".45" stop-color="#2a8ad8"/><stop offset=".8" stop-color="#154a9a"/><stop offset="1" stop-color="#0c2a5a"/></radialGradient>
<radialGradient id="gOrbB" cx=".5" cy="1" r=".6"><stop offset="0" stop-color="#5af0ff" stop-opacity=".9"/><stop offset="1" stop-color="#2a8ad8" stop-opacity="0"/></radialGradient>
<linearGradient id="gIE" x1="0" y1="0" x2="0" y2="1"><stop offset="0" stop-color="#7adcfc"/><stop offset=".5" stop-color="#2a9ae8"/><stop offset="1" stop-color="#1a6ac8"/></linearGradient>
<linearGradient id="gQQ" x1="0" y1="0" x2="1" y2="1"><stop offset="0" stop-color="#3ac0ff"/><stop offset="1" stop-color="#0a5ae0"/></linearGradient>
<linearGradient id="gWps" x1="0" y1="0" x2="0" y2="1"><stop offset="0" stop-color="#3ab0ff"/><stop offset="1" stop-color="#2a8af0"/></linearGradient>
<linearGradient id="gFold" x1="0" y1="0" x2="0" y2="1"><stop offset="0" stop-color="#fbe9a0"/><stop offset="1" stop-color="#f0c850"/></linearGradient>
</defs>
<circle cx="17.700" cy="699.800" r="12.200" fill="#0a1a3a" opacity=".55"/><circle cx="17.700" cy="699.800" r="11.600" fill="url(#gOrb)" stroke="#9ad0f0" stroke-width=".6" stroke-opacity=".6"/><circle cx="17.700" cy="699.800" r="11.600" fill="url(#gOrbB)"/>
<path d="M11.600 693.800Q14.600 692 17.600 693.800L16.600 699.200Q13.800 698 10.600 699.600z" fill="#f0602a"/><path d="M18.600 694.200Q21.600 696 24.800 694.200L23.600 699.800Q20.600 701.400 17.600 699.800z" fill="#7ac83a"/><path d="M10.400 700.600Q13.400 699.200 16.400 700.600L15.400 706Q12.400 704.600 9.400 706z" fill="#3a9af0"/><path d="M17.400 701Q20.400 702.600 23.400 701L22.400 706.400Q19.400 708 16.400 706.400z" fill="#f8c83a"/>
<ellipse cx="57.800" cy="698.400" rx="12.400" ry="4.600" transform="rotate(-40 57.800 698.400)" fill="none" stroke="#f0b818" stroke-width="1.700"/>
<path d="M67.200 701.600H56.200Q56.600 704.600 59.600 704.800Q61.800 704.800 63 703.200L66.600 704.600Q64.400 708.400 59.400 708.400Q52 708 51.600 700.400Q52 692.800 59.400 692.600Q67.200 693 67.200 701.600zM56.300 698.600H62.800Q62.400 696 59.500 695.900Q56.800 696 56.300 698.600z" fill="url(#gIE)" stroke="#1a78d0" stroke-width=".4"/>
<path d="M48.800 705.600Q46.800 701.400 52.400 695.800" fill="none" stroke="#f0b818" stroke-width="1.700"/><path d="M62.600 690.800Q66.600 688.600 67.800 691" fill="none" stroke="#f0b818" stroke-width="1.600"/>
<circle cx="99.600" cy="698.600" r="7.600" fill="none" stroke="url(#gQQ)" stroke-width="4.200"/><path d="M100 707.800Q97.400 707.600 97.600 705.200Q98 703.400 100.200 703.600Q101.400 700.800 104.400 701.600Q106.400 702.400 106.600 704.400Q109.200 704.400 109.200 706.200Q109 707.800 107 707.800z" fill="#fff"/>
<rect x="130" y="689" width="21" height="21" rx="3" fill="url(#gWps)"/><path d="M134.600 696L137.400 704.800 140.600 696.600 143.800 704.800 146.600 696" fill="none" stroke="#fff" stroke-width="1.150" stroke-linejoin="miter"/>
<path d="M171.400 692.400H178L179.600 694H191.600V707.600H171.400z" fill="url(#gFold)" stroke="#c89a30" stroke-width=".5"/><path d="M173 693.600H177M181 695.400H190" stroke="#fff" stroke-width="1.200"/><rect x="174.400" y="692.800" width="1.400" height="1.200" fill="#3ac03a"/><rect x="178.600" y="693.600" width="1.400" height="1.200" fill="#e03a2a"/><rect x="184" y="695" width="1.400" height="1.200" fill="#2a7ae0"/><path d="M173 701.600Q173 700 174.600 700H188.400Q190 700 190 701.600V709.400H186V704.400H177V709.400H173z" fill="#6ac0f0" stroke="#3a8ac8" stroke-width=".5"/><path d="M174 701H189" stroke="#c8ecfc" stroke-width="1"/>
<rect x="212" y="689.400" width="20.600" height="20.400" fill="#a8aef4" stroke="#3a6ae0" stroke-width="1"/><path d="M219.600 692.400L221.600 691 223 692.400V701H219.600z" fill="#e02a3a"/><path d="M223.400 692L225 690.600 226.400 692V700H223.400z" fill="#2a4ab8"/><path d="M226.800 691.600L229 690.200 231 691.600V705H226.800z" fill="#e82aa0"/><path d="M216 700.600L224 697.400 230.600 703.600 222 708.600z" fill="#f4f4f0" stroke="#4a8a4a" stroke-width=".6"/><path d="M213.400 697L222 708.600" stroke="#2a9a3a" stroke-width="1.200"/><circle cx="223.600" cy="702.400" r="1.600" fill="none" stroke="#8a8a8a" stroke-width=".6"/>
<rect x="253.400" y="690.600" width="20.400" height="19.400" fill="#fff"/><rect x="254.600" y="691.800" width="18" height="17" fill="#04040a"/><path d="M255.400 692.600Q262 697 265.600 708.400L262 708.600Q260.600 699 255.400 694.600z" fill="#2a8af0"/><path d="M258 693.600Q263 697.600 266.400 706L264 706.400Q261.600 698.400 258 695z" fill="#7ad0ff"/><path d="M262.600 696.400Q266 692.400 270.600 695.400Q271.600 699.600 268.600 702.600Q266.600 704.400 265.200 702z" fill="#f08a1a"/><circle cx="266.800" cy="698.400" r="2.200" fill="#ffe890"/><path d="M268 701.400L271.400 703.400" stroke="#c8301a" stroke-width="1.400"/>
<path d="M301 691.200Q309 691.200 309 697.400Q309 703.400 301 703.400Q299.400 703.400 298 703L294.800 704.800 295.600 702Q293 700.400 293 697.400Q293 691.200 301 691.200z" fill="#6ad83a"/><circle cx="298" cy="696" r="1.100" fill="#2a6a1a"/><circle cx="303.600" cy="696" r="1.100" fill="#2a6a1a"/>
<path d="M309 697.600Q315.600 697.600 315.600 702.800Q315.600 705.400 313.400 706.800L314 709.200 311.400 707.800Q310.200 708.200 309 708.200Q302.400 708 302.400 702.800Q302.400 697.600 309 697.600z" fill="#f2f2f2"/><circle cx="306.800" cy="701.600" r=".9" fill="#8a8a8a"/><circle cx="311.200" cy="701.600" r=".9" fill="#8a8a8a"/>
<rect x="970.600" y="698" width="9.600" height="5.600" rx=".8" fill="#9a909a" stroke="#7a707a" stroke-width=".5"/><path d="M972 699.600H979M972 701.600H979" stroke="#c8c0c8" stroke-width=".7" stroke-dasharray="1 .6"/><path d="M975 698V696Q977 695.600 978 696.400" fill="none" stroke="#8a808a" stroke-width=".6"/>
<circle cx="989.800" cy="699.600" r="5.200" fill="#1a3ab8" stroke="#c8d8f8" stroke-width=".8"/><text x="987.400" y="702.800" font-size="8.400" font-weight="bold" fill="#fff" font-family="Liberation Sans">?</text>
<path d="M1002.600 694.600H1005.600V696.600H1002.600zM1004 694.400V693.400H1007V695.400H1005.800" fill="none" stroke="#e8e0e8" stroke-width=".7"/><path d="M1002.400 701.800H1006.200L1004.300 703.800z" fill="#f0e8f0"/>
<rect x="1017.600" y="695" width="10" height="8" fill="#6a6a72" stroke="#2a2a9a" stroke-width=".8"/><path d="M1018 705.400H1020.600M1024.600 705.400H1027.400" stroke="#2a2a9a" stroke-width="1.100"/>
<rect x="1033.200" y="695" width="10.600" height="10.400" rx="1" fill="#2a7ae8"/><path d="M1035 697.400H1038.600V700H1041.400V703.600H1035z" fill="none" stroke="#fff" stroke-width=".8"/><circle cx="1036.400" cy="697" r="1.100" fill="#fff"/>
<rect x="1049.400" y="695" width="10.400" height="10.400" rx="1.500" fill="#e8301a"/><circle cx="1054.600" cy="700.600" r="2.800" fill="none" stroke="#fff" stroke-width=".9"/><circle cx="1054.600" cy="700.600" r="1" fill="#fff"/><path d="M1055.400 697.800Q1056 696 1057.400 696.400" stroke="#fff" stroke-width=".8" fill="none"/>
<ellipse cx="1070.200" cy="701" rx="4.200" ry="5" fill="#0a0a0a"/><ellipse cx="1070.200" cy="702.400" rx="2.600" ry="3" fill="#fff"/><circle cx="1070.200" cy="696.400" r="2.600" fill="#0a0a0a"/><path d="M1066.400 700Q1070.200 702 1074 700L1074.200 701.400Q1070.200 703.400 1066.200 701.400z" fill="#e82a2a"/><ellipse cx="1067.600" cy="706" rx="1.800" ry=".8" fill="#f4a020"/><ellipse cx="1072.800" cy="706" rx="1.800" ry=".8" fill="#f4a020"/><ellipse cx="1070.200" cy="697.800" rx="1.200" ry=".5" fill="#f4a020"/>
<ellipse cx="1084.400" cy="699.600" rx="4.200" ry="3.600" fill="#6ad83a"/><ellipse cx="1088.200" cy="701.800" rx="3.600" ry="3" fill="#eef4e8"/>
<rect x="1096.600" y="694.800" width="10.600" height="10.800" fill="#fafafa"/><rect x="1098.400" y="701.600" width="1.800" height="3" fill="#3ab04a"/><rect x="1101" y="699.400" width="1.800" height="5.200" fill="#3ab04a"/><rect x="1103.600" y="696.600" width="1.800" height="8" fill="#3ab04a"/>
<path d="M1112.600 698.400H1115L1118.600 695.400V705.400L1115 702.400H1112.600z" fill="#f0905a" stroke="#a8502a" stroke-width=".5"/><path d="M1120 697.400Q1122 700.400 1120 703.400M1121.800 696Q1124.600 700.400 1121.800 704.800" fill="none" stroke="#e8a080" stroke-width=".8"/>
<rect x="1127.800" y="695.200" width="10.600" height="10.400" fill="#0a0a0a"/><rect x="1129.400" y="698.400" width="3.200" height="4" rx=".8" fill="#fff"/><rect x="1133.600" y="698.400" width="3.200" height="4" rx=".8" fill="#fff"/><rect x="1130.600" y="699.400" width="1" height="2" fill="#0a0a0a"/><rect x="1134.600" y="699.400" width="1" height="2" fill="#0a0a0a"/>
<rect x="1144" y="695" width="9.600" height="10.400" fill="#2a8ae0"/><path d="M1145.400 696.400H1149V700H1145.400zM1150 697.400H1152.400V703.600H1146.400V701.400" fill="none" stroke="#c8f0ff" stroke-width=".8"/><path d="M1144 705.400H1153.600" stroke="#f0e060" stroke-width=".9"/>
<rect x="1160.200" y="695.600" width="5" height="9.600" fill="#f4f4f4" stroke="#3a3a3a" stroke-width=".7"/><path d="M1166.600 697V699.400M1169.400 697V699.400" stroke="#f4f4f4" stroke-width="1"/><path d="M1165.600 699.400H1170.400V701.600Q1168 704 1165.600 701.600z" fill="#f4f4f4" stroke="#4a4a4a" stroke-width=".5"/><path d="M1168 703V705.400" stroke="#f4f4f4" stroke-width=".9"/>
<rect x="1175.6" y="702.6" width="1.500" height="2" fill="#e8e0e8" opacity=".85"/>
<rect x="1177.8" y="701.0" width="1.500" height="3.6" fill="#e8e0e8" opacity=".85"/>
<rect x="1180" y="699.4" width="1.500" height="5.2" fill="#e8e0e8" opacity=".85"/>
<rect x="1182.2" y="697.6" width="1.500" height="7" fill="#e8e0e8" opacity=".85"/>
<rect x="1184.4" y="695.8000000000001" width="1.500" height="8.8" fill="#e8e0e8" opacity=".85"/>
<path d="M1193.400 698.600H1195.400L1198.600 695.600V705.200L1195.400 702.200H1193.400z" fill="#f8f8f8"/><path d="M1200.400 698Q1202 700.400 1200.400 702.800" fill="none" stroke="#f8f8f8" stroke-width=".8"/>
</svg>
</body></html>
